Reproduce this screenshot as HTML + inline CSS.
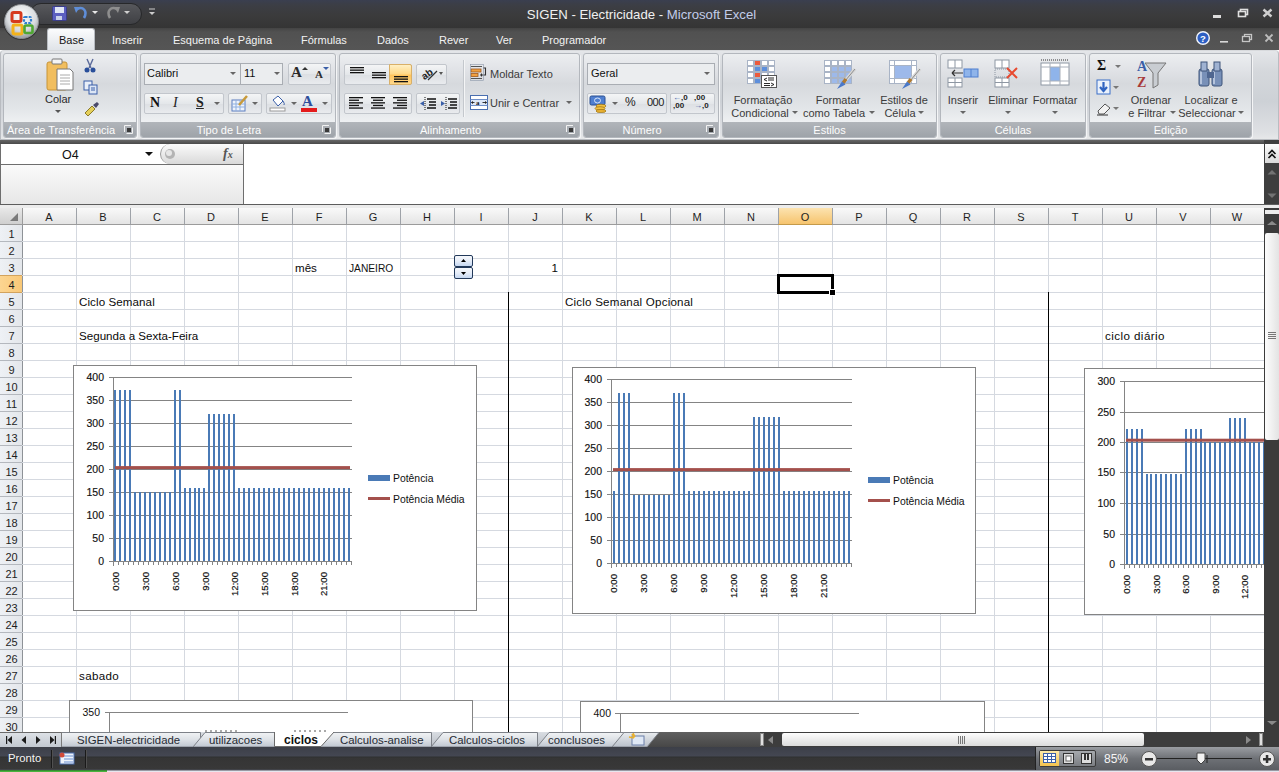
<!DOCTYPE html>
<html><head><meta charset="utf-8"><style>
html,body{margin:0;padding:0;width:1279px;height:772px;overflow:hidden;background:#fff;font-family:"Liberation Sans", sans-serif;}
</style></head><body>
<div style="position:absolute;left:0px;top:0px;width:1279px;height:28px;background:linear-gradient(#3a3f50 0px,#3c3e45 5px,#3b3b3c 15px,#353535 28px);"></div><div style="position:absolute;left:30px;top:3px;width:112px;height:22px;background:linear-gradient(#57585c,#3f4044);border-radius:11px;border:1px solid #27282a;box-sizing:border-box;"></div><svg style="position:absolute;left:52px;top:6px" width="15" height="15" viewBox="0 0 15 15"><rect x="0.5" y="0.5" width="14" height="14" rx="1" fill="#5b5fc0" stroke="#3a3d8a"/><rect x="3" y="1" width="9" height="6" fill="#dfe6f5"/><rect x="4" y="10" width="6" height="4" fill="#c8d0ea"/></svg><svg style="position:absolute;left:73px;top:5px" width="16" height="16" viewBox="0 0 16 16"><path d="M4 4 C10 1 15 6 11 13" stroke="#5f8ed8" stroke-width="2.6" fill="none"/><path d="M1 2 L7 2 L3 8 Z" fill="#5f8ed8"/></svg><svg style="position:absolute;left:92px;top:11px" width="6" height="4"><path d="M0 0 H6 L3 3 Z" fill="#e8e8e8"/></svg><svg style="position:absolute;left:105px;top:5px" width="16" height="16" viewBox="0 0 16 16"><path d="M12 4 C6 1 1 6 5 13" stroke="#8e8e8e" stroke-width="2.6" fill="none"/><path d="M15 2 L9 2 L13 8 Z" fill="#8e8e8e"/></svg><svg style="position:absolute;left:124px;top:11px" width="6" height="4"><path d="M0 0 H6 L3 3 Z" fill="#d0d0d0"/></svg><svg style="position:absolute;left:148px;top:8px" width="8" height="10"><path d="M1 1 H7" stroke="#ccc"/><path d="M1 4 H7 L4 7 Z" fill="#ccc"/></svg><div style="position:absolute;left:0;width:1279px;top:7px;text-align:center;font-size:13.2px;line-height:16px;color:#f0f0f0;white-space:nowrap;padding-left:2px">SIGEN - Electricidade - <span style="color:#c2cdea">Microsoft Excel</span></div><svg style="position:absolute;left:1200px;top:0px" width="79" height="28" viewBox="0 0 79 28"><rect x="13" y="15" width="8" height="3" fill="#dcdcdc"/><rect x="40.5" y="9.5" width="7" height="5" fill="none" stroke="#e0e0e0" stroke-width="1.6"/><rect x="38.5" y="11.5" width="7" height="5" fill="#3a3a3a" stroke="#e0e0e0" stroke-width="1.6"/><path d="M63.5 9.5 L71.5 16.5 M71.5 9.5 L63.5 16.5" stroke="#cfcfcf" stroke-width="2.4"/></svg><div style="position:absolute;left:0px;top:28px;width:1279px;height:22px;background:linear-gradient(#444,#515151 4px,#555 22px);"></div><div style="position:absolute;left:47px;top:28px;width:48px;height:24px;background:linear-gradient(#fbfcfd,#dde1e6);border:1px solid #b8bcc2;border-bottom:none;border-radius:3px 3px 0 0;box-sizing:border-box;"></div><div style="position:absolute;left:59px;top:34px;font-size:11px;line-height:13px;color:#151515;white-space:nowrap;">Base</div><div style="position:absolute;left:112px;top:34px;font-size:11px;line-height:13px;color:#f2f2f2;white-space:nowrap;">Inserir</div><div style="position:absolute;left:173px;top:34px;font-size:11px;line-height:13px;color:#f2f2f2;white-space:nowrap;">Esquema de Página</div><div style="position:absolute;left:301px;top:34px;font-size:11px;line-height:13px;color:#f2f2f2;white-space:nowrap;">Fórmulas</div><div style="position:absolute;left:377px;top:34px;font-size:11px;line-height:13px;color:#f2f2f2;white-space:nowrap;">Dados</div><div style="position:absolute;left:439px;top:34px;font-size:11px;line-height:13px;color:#f2f2f2;white-space:nowrap;">Rever</div><div style="position:absolute;left:496px;top:34px;font-size:11px;line-height:13px;color:#f2f2f2;white-space:nowrap;">Ver</div><div style="position:absolute;left:542px;top:34px;font-size:11px;line-height:13px;color:#f2f2f2;white-space:nowrap;">Programador</div><svg style="position:absolute;left:1194px;top:29px" width="85" height="20" viewBox="0 0 85 20"><circle cx="9" cy="9" r="6.3" fill="#2d5fc4" stroke="#f2f5fb" stroke-width="1.4"/><text x="9" y="12.5" font-size="9.5" font-weight="bold" text-anchor="middle" fill="#fff" font-family="Liberation Sans">?</text><rect x="26" y="12" width="8" height="1.6" fill="#d8d8d8"/><rect x="50.5" y="5.5" width="7" height="5" fill="none" stroke="#c6c6c6" stroke-width="1.3"/><rect x="48.5" y="7.5" width="7" height="5" fill="#4f4f4f" stroke="#c6c6c6" stroke-width="1.3"/><path d="M71.5 5.5 L78.5 12.5 M78.5 5.5 L71.5 12.5" stroke="#bdbdbd" stroke-width="1.8"/></svg><svg style="position:absolute;left:2px;top:2px" width="40" height="40" viewBox="0 0 40 40"><defs><radialGradient id="ob" cx="50%" cy="35%" r="60%"><stop offset="0" stop-color="#ffffff"/><stop offset="0.7" stop-color="#d9dcdf"/><stop offset="1" stop-color="#a2a6ab"/></radialGradient></defs><circle cx="19.5" cy="20" r="18" fill="#222" opacity="0.6"/><circle cx="19.5" cy="19.5" r="17" fill="url(#ob)" stroke="#8a8d91" stroke-width="1"/><rect x="10" y="10.5" width="9" height="9" rx="1.5" fill="none" stroke="#d63a1e" stroke-width="3"/><rect x="22" y="15" width="7" height="6" rx="1" fill="none" stroke="#2f7fd0" stroke-width="2.2" stroke-dasharray="2.5 1.2"/><rect x="11" y="23" width="9" height="9" rx="1.5" fill="none" stroke="#f3b21a" stroke-width="3"/><rect x="22.5" y="23.5" width="8" height="7.5" rx="1.5" fill="none" stroke="#4fa832" stroke-width="2.6"/></svg><div style="position:absolute;left:0px;top:50px;width:1279px;height:90px;background:linear-gradient(#e4e6e9 0px,#d5d8dc 20px,#cdd1d6 50px,#dfe1e4 82px,#e9eaeb 90px);border:1px solid #b9bcc1;border-top-color:#d8dadd;border-radius:4px 4px 0 0;box-sizing:border-box;"></div><div style="position:absolute;left:3px;top:53px;width:134px;height:85px;border:1px solid #b3b7bd;border-radius:3px;box-sizing:border-box;box-shadow:1px 1px 0 #f4f5f6;background:linear-gradient(#eceef0 0px,#e2e4e8 14px,#d6d9dd 30px,#e3e6e9 55px,#eef0f2 68px);"></div><div style="position:absolute;left:4px;top:122px;width:132px;height:15px;background:linear-gradient(#b1b5ba,#9ea3a9);border-radius:0 0 2px 2px;"></div><div style="position:absolute;left:-139.0px;width:400px;top:124.0px;text-align:center;font-size:11px;line-height:13px;color:#fdfdfd;white-space:nowrap;">Área de Transferência</div><svg style="position:absolute;left:124px;top:125px" width="9" height="9"><path d="M0.5 7 V0.5 H7" fill="none" stroke="#f2f2f2"/><path d="M2.5 8.5 H8.5 V2.5" fill="none" stroke="#f2f2f2"/><rect x="3" y="3" width="4" height="4" fill="#3a3a3a"/></svg><div style="position:absolute;left:140px;top:53px;width:196px;height:85px;border:1px solid #b3b7bd;border-radius:3px;box-sizing:border-box;box-shadow:1px 1px 0 #f4f5f6;background:linear-gradient(#eceef0 0px,#e2e4e8 14px,#d6d9dd 30px,#e3e6e9 55px,#eef0f2 68px);"></div><div style="position:absolute;left:141px;top:122px;width:194px;height:15px;background:linear-gradient(#b1b5ba,#9ea3a9);border-radius:0 0 2px 2px;"></div><div style="position:absolute;left:29.0px;width:400px;top:124.0px;text-align:center;font-size:11px;line-height:13px;color:#fdfdfd;white-space:nowrap;">Tipo de Letra</div><svg style="position:absolute;left:322px;top:125px" width="9" height="9"><path d="M0.5 7 V0.5 H7" fill="none" stroke="#f2f2f2"/><path d="M2.5 8.5 H8.5 V2.5" fill="none" stroke="#f2f2f2"/><rect x="3" y="3" width="4" height="4" fill="#3a3a3a"/></svg><div style="position:absolute;left:339px;top:53px;width:241px;height:85px;border:1px solid #b3b7bd;border-radius:3px;box-sizing:border-box;box-shadow:1px 1px 0 #f4f5f6;background:linear-gradient(#eceef0 0px,#e2e4e8 14px,#d6d9dd 30px,#e3e6e9 55px,#eef0f2 68px);"></div><div style="position:absolute;left:340px;top:122px;width:239px;height:15px;background:linear-gradient(#b1b5ba,#9ea3a9);border-radius:0 0 2px 2px;"></div><div style="position:absolute;left:250.5px;width:400px;top:124.0px;text-align:center;font-size:11px;line-height:13px;color:#fdfdfd;white-space:nowrap;">Alinhamento</div><svg style="position:absolute;left:566px;top:125px" width="9" height="9"><path d="M0.5 7 V0.5 H7" fill="none" stroke="#f2f2f2"/><path d="M2.5 8.5 H8.5 V2.5" fill="none" stroke="#f2f2f2"/><rect x="3" y="3" width="4" height="4" fill="#3a3a3a"/></svg><div style="position:absolute;left:583px;top:53px;width:136px;height:85px;border:1px solid #b3b7bd;border-radius:3px;box-sizing:border-box;box-shadow:1px 1px 0 #f4f5f6;background:linear-gradient(#eceef0 0px,#e2e4e8 14px,#d6d9dd 30px,#e3e6e9 55px,#eef0f2 68px);"></div><div style="position:absolute;left:584px;top:122px;width:134px;height:15px;background:linear-gradient(#b1b5ba,#9ea3a9);border-radius:0 0 2px 2px;"></div><div style="position:absolute;left:442.0px;width:400px;top:124.0px;text-align:center;font-size:11px;line-height:13px;color:#fdfdfd;white-space:nowrap;">Número</div><svg style="position:absolute;left:706px;top:125px" width="9" height="9"><path d="M0.5 7 V0.5 H7" fill="none" stroke="#f2f2f2"/><path d="M2.5 8.5 H8.5 V2.5" fill="none" stroke="#f2f2f2"/><rect x="3" y="3" width="4" height="4" fill="#3a3a3a"/></svg><div style="position:absolute;left:722px;top:53px;width:215px;height:85px;border:1px solid #b3b7bd;border-radius:3px;box-sizing:border-box;box-shadow:1px 1px 0 #f4f5f6;background:linear-gradient(#eceef0 0px,#e2e4e8 14px,#d6d9dd 30px,#e3e6e9 55px,#eef0f2 68px);"></div><div style="position:absolute;left:723px;top:122px;width:213px;height:15px;background:linear-gradient(#b1b5ba,#9ea3a9);border-radius:0 0 2px 2px;"></div><div style="position:absolute;left:629.5px;width:400px;top:124.0px;text-align:center;font-size:11px;line-height:13px;color:#fdfdfd;white-space:nowrap;">Estilos</div><div style="position:absolute;left:940px;top:53px;width:146px;height:85px;border:1px solid #b3b7bd;border-radius:3px;box-sizing:border-box;box-shadow:1px 1px 0 #f4f5f6;background:linear-gradient(#eceef0 0px,#e2e4e8 14px,#d6d9dd 30px,#e3e6e9 55px,#eef0f2 68px);"></div><div style="position:absolute;left:941px;top:122px;width:144px;height:15px;background:linear-gradient(#b1b5ba,#9ea3a9);border-radius:0 0 2px 2px;"></div><div style="position:absolute;left:813.0px;width:400px;top:124.0px;text-align:center;font-size:11px;line-height:13px;color:#fdfdfd;white-space:nowrap;">Células</div><div style="position:absolute;left:1089px;top:53px;width:163px;height:85px;border:1px solid #b3b7bd;border-radius:3px;box-sizing:border-box;box-shadow:1px 1px 0 #f4f5f6;background:linear-gradient(#eceef0 0px,#e2e4e8 14px,#d6d9dd 30px,#e3e6e9 55px,#eef0f2 68px);"></div><div style="position:absolute;left:1090px;top:122px;width:161px;height:15px;background:linear-gradient(#b1b5ba,#9ea3a9);border-radius:0 0 2px 2px;"></div><div style="position:absolute;left:970.5px;width:400px;top:124.0px;text-align:center;font-size:11px;line-height:13px;color:#fdfdfd;white-space:nowrap;">Edição</div><svg style="position:absolute;left:44px;top:57px" width="32" height="36" viewBox="0 0 32 36"><rect x="3" y="5" width="20" height="28" rx="2" fill="#f1be5f" stroke="#c89437"/><rect x="8" y="2" width="10" height="5" rx="1" fill="#f4f4f4" stroke="#777"/><path d="M13 12 H26 L29 15 V33 H13 Z" fill="#fff" stroke="#777"/><path d="M16 18 H26 M16 21 H26 M16 24 H26 M16 27 H26" stroke="#aaa"/></svg><div style="position:absolute;left:45px;top:93px;font-size:11px;line-height:13px;color:#2b2b2b;white-space:nowrap;">Colar</div><svg style="position:absolute;left:55px;top:110px" width="6" height="4"><path d="M0 0 H6 L3 3 Z" fill="#555"/></svg><svg style="position:absolute;left:83px;top:58px" width="14" height="16" viewBox="0 0 14 16"><path d="M4 1 L8 10 M10 1 L6 10" stroke="#5a6a9a" stroke-width="1.4"/><circle cx="4" cy="12" r="2.5" fill="#2a4f9a"/><circle cx="10" cy="12" r="2.5" fill="#2a4f9a"/></svg><svg style="position:absolute;left:83px;top:80px" width="16" height="15" viewBox="0 0 16 15"><rect x="1" y="1" width="8" height="9" fill="#e8eef8" stroke="#3a5fa8"/><rect x="6" y="5" width="8" height="9" fill="#dce6f5" stroke="#3a5fa8"/><path d="M8 8 H12 M8 10 H12" stroke="#3a5fa8"/></svg><svg style="position:absolute;left:83px;top:101px" width="17" height="17" viewBox="0 0 17 17"><path d="M2 12 L9 5 L12 8 L5 15 Z" fill="#e5cf5a" stroke="#8a7a2a"/><path d="M10 4 L14 1 L16 3 L13 7 Z" fill="#4a4a6a"/></svg><div style="position:absolute;left:144px;top:63px;width:97px;height:22px;border:1px solid #a9adb3;box-sizing:border-box;background:#ebedef;"></div><div style="position:absolute;left:240px;top:63px;width:43px;height:22px;border:1px solid #a9adb3;box-sizing:border-box;background:#ebedef;"></div><div style="position:absolute;left:147px;top:67px;font-size:11px;line-height:13px;color:#111;white-space:nowrap;">Calibri</div><div style="position:absolute;left:244px;top:67px;font-size:11px;line-height:13px;color:#111;white-space:nowrap;">11</div><svg style="position:absolute;left:230px;top:72px" width="6" height="4"><path d="M0 0 H6 L3 3 Z" fill="#666"/></svg><svg style="position:absolute;left:274px;top:72px" width="6" height="4"><path d="M0 0 H6 L3 3 Z" fill="#666"/></svg><div style="position:absolute;left:288px;top:63px;width:43px;height:22px;border:1px solid #c2c6cc;border-radius:2px;box-sizing:border-box;background:linear-gradient(#f4f5f6,#e4e7ea 50%,#dcdfe3 51%,#e9ebee);"></div><div style="position:absolute;left:291px;top:64px;font-size:15px;line-height:17px;color:#2a2a2a;white-space:nowrap;font-family:Liberation Serif;font-weight:bold;">A</div><div style="position:absolute;left:315px;top:68px;font-size:11px;line-height:13px;color:#2a2a2a;white-space:nowrap;font-family:Liberation Serif;font-weight:bold;">A</div><svg style="position:absolute;left:302px;top:67px" width="6" height="4"><path d="M0 3 H6 L3 0 Z" fill="#333"/></svg><svg style="position:absolute;left:323px;top:67px" width="6" height="4"><path d="M0 0 H6 L3 3 Z" fill="#3a5fa8"/></svg><div style="position:absolute;left:144px;top:93px;width:80px;height:21px;border:1px solid #c2c6cc;border-radius:2px;box-sizing:border-box;background:linear-gradient(#f4f5f6,#e4e7ea 50%,#dcdfe3 51%,#e9ebee);"></div><div style="position:absolute;left:150px;top:95px;font-size:14px;line-height:16px;color:#111;white-space:nowrap;font-family:Liberation Serif;font-weight:bold;">N</div><div style="position:absolute;left:173px;top:95px;font-size:14px;line-height:16px;color:#222;white-space:nowrap;font-family:Liberation Serif;font-style:italic;">I</div><div style="position:absolute;left:196px;top:95px;font-size:14px;line-height:16px;color:#222;white-space:nowrap;font-family:Liberation Serif;font-weight:bold;"><u>S</u></div><svg style="position:absolute;left:214px;top:102px" width="6" height="4"><path d="M0 0 H6 L3 3 Z" fill="#666"/></svg><div style="position:absolute;left:228px;top:93px;width:34px;height:21px;border:1px solid #c2c6cc;border-radius:2px;box-sizing:border-box;background:linear-gradient(#f4f5f6,#e4e7ea 50%,#dcdfe3 51%,#e9ebee);"></div><svg style="position:absolute;left:231px;top:95px" width="18" height="17" viewBox="0 0 18 17"><rect x="1" y="5" width="13" height="11" fill="#eef3fb" stroke="#5d7fc0"/><path d="M1 9 H14 M1 12 H14 M5 5 V16 M9 5 V16" stroke="#8fb0e0"/><path d="M8 10 L16 1" stroke="#c89a3a" stroke-width="2.5"/></svg><svg style="position:absolute;left:252px;top:102px" width="6" height="4"><path d="M0 0 H6 L3 3 Z" fill="#666"/></svg><div style="position:absolute;left:266px;top:93px;width:66px;height:21px;border:1px solid #c2c6cc;border-radius:2px;box-sizing:border-box;background:linear-gradient(#f4f5f6,#e4e7ea 50%,#dcdfe3 51%,#e9ebee);"></div><svg style="position:absolute;left:269px;top:95px" width="18" height="17" viewBox="0 0 18 17"><path d="M4 5 L9 1 L14 6 L9 11 Z" fill="#fff" stroke="#3a5fa8"/><path d="M14 6 Q16 9 15 10" stroke="#3a5fa8" fill="none"/><rect x="1" y="13" width="15" height="3" fill="#fff" stroke="#999"/></svg><svg style="position:absolute;left:291px;top:102px" width="6" height="4"><path d="M0 0 H6 L3 3 Z" fill="#666"/></svg><div style="position:absolute;left:302px;top:93px;font-size:15px;line-height:17px;color:#2d4f9c;white-space:nowrap;font-family:Liberation Serif;font-weight:bold;">A</div><div style="position:absolute;left:301px;top:108px;width:16px;height:4px;background:#e41b1b;"></div><svg style="position:absolute;left:322px;top:102px" width="6" height="4"><path d="M0 0 H6 L3 3 Z" fill="#666"/></svg><div style="position:absolute;left:344px;top:64px;width:68px;height:21px;border:1px solid #c2c6cc;border-radius:2px;box-sizing:border-box;background:linear-gradient(#f4f5f6,#e4e7ea 50%,#dcdfe3 51%,#e9ebee);"></div><div style="position:absolute;left:389px;top:64px;width:23px;height:21px;background:linear-gradient(#fff0c4,#ffd98a 45%,#ffc45e 55%,#ffd88a);border:1px solid #d9b068;box-sizing:border-box;border-radius:0 2px 2px 0;"></div><svg style="position:absolute;left:350px;top:67px" width="20" height="14"><rect x="0" y="0.0" width="14" height="1.3" fill="#111"/><rect x="0" y="2.5" width="14" height="1.3" fill="#111"/><rect x="0" y="5.0" width="14" height="1.3" fill="#111"/></svg><svg style="position:absolute;left:372px;top:72px" width="20" height="14"><rect x="0" y="0.0" width="14" height="1.3" fill="#111"/><rect x="0" y="2.5" width="14" height="1.3" fill="#111"/><rect x="0" y="5.0" width="14" height="1.3" fill="#111"/></svg><svg style="position:absolute;left:394px;top:76px" width="20" height="14"><rect x="0" y="0.0" width="14" height="1.3" fill="#111"/><rect x="0" y="2.5" width="14" height="1.3" fill="#111"/><rect x="0" y="5.0" width="14" height="1.3" fill="#111"/></svg><div style="position:absolute;left:416px;top:64px;width:31px;height:21px;border:1px solid #c2c6cc;border-radius:2px;box-sizing:border-box;background:linear-gradient(#f4f5f6,#e4e7ea 50%,#dcdfe3 51%,#e9ebee);"></div><svg style="position:absolute;left:420px;top:66px" width="24" height="16" viewBox="0 0 24 16"><text x="1" y="12" font-size="10" font-family="Liberation Sans" font-weight="bold" fill="#222" transform="rotate(-35 6 8)">ab</text><path d="M8 14 L17 5" stroke="#333" stroke-width="1.2"/><path d="M19 6 H23 L21 9 Z" fill="#555"/></svg><div style="position:absolute;left:344px;top:93px;width:68px;height:21px;border:1px solid #c2c6cc;border-radius:2px;box-sizing:border-box;background:linear-gradient(#f4f5f6,#e4e7ea 50%,#dcdfe3 51%,#e9ebee);"></div><svg style="position:absolute;left:349px;top:97px" width="20" height="14"><rect x="0" y="0.0" width="14" height="1.3" fill="#111"/><rect x="0" y="2.6" width="10" height="1.3" fill="#111"/><rect x="0" y="5.2" width="14" height="1.3" fill="#111"/><rect x="0" y="7.8" width="10" height="1.3" fill="#111"/><rect x="0" y="10.4" width="14" height="1.3" fill="#111"/></svg><svg style="position:absolute;left:371px;top:97px" width="20" height="14"><rect x="0" y="0.0" width="14" height="1.3" fill="#111"/><rect x="2" y="2.6" width="10" height="1.3" fill="#111"/><rect x="0" y="5.2" width="14" height="1.3" fill="#111"/><rect x="2" y="7.8" width="10" height="1.3" fill="#111"/><rect x="0" y="10.4" width="14" height="1.3" fill="#111"/></svg><svg style="position:absolute;left:393px;top:97px" width="20" height="14"><rect x="0" y="0.0" width="14" height="1.3" fill="#111"/><rect x="4" y="2.6" width="10" height="1.3" fill="#111"/><rect x="0" y="5.2" width="14" height="1.3" fill="#111"/><rect x="4" y="7.8" width="10" height="1.3" fill="#111"/><rect x="0" y="10.4" width="14" height="1.3" fill="#111"/></svg><div style="position:absolute;left:416px;top:93px;width:44px;height:21px;border:1px solid #c2c6cc;border-radius:2px;box-sizing:border-box;background:linear-gradient(#f4f5f6,#e4e7ea 50%,#dcdfe3 51%,#e9ebee);"></div><svg style="position:absolute;left:419px;top:96px" width="40" height="16" viewBox="0 0 40 16"><path d="M6 1 V15 M27 1 V15" stroke="#111" stroke-dasharray="1 1"/><path d="M8 3 H17 M10 6 H17 M10 9 H17 M8 12 H17 M29 3 H38 M31 6 H38 M31 9 H38 M29 12 H38" stroke="#111" stroke-width="1.6"/><path d="M1 7.5 L5 5 V10 Z" fill="#3a5fa8"/><path d="M26 7.5 L22 5 V10 Z" fill="#3a5fa8"/></svg><div style="position:absolute;left:463px;top:60px;width:1px;height:57px;background:#c4c8cd;border-right:1px solid #f4f5f6;"></div><svg style="position:absolute;left:470px;top:64px" width="18" height="18" viewBox="0 0 18 18"><path d="M1 2.5 H12 M1 14.5 H12" stroke="#555" stroke-width="1.2"/><rect x="1" y="5" width="10" height="3" fill="#f0a040" stroke="#a05a20" stroke-width="0.8"/><rect x="1" y="9.5" width="7" height="3" fill="#f0a040" stroke="#a05a20" stroke-width="0.8"/><path d="M13 4 H15.5 V11 H11" stroke="#333" stroke-width="1.1" fill="none"/><path d="M12 9 L10 11 L12 13 Z" fill="#333"/><rect x="0.5" y="0.5" width="13" height="16" fill="none" stroke="#8a96a8" stroke-width="0.6"/></svg><div style="position:absolute;left:490px;top:68px;font-size:11px;line-height:13px;color:#3b3b3b;white-space:nowrap;">Moldar Texto</div><svg style="position:absolute;left:470px;top:95px" width="18" height="16" viewBox="0 0 18 16"><rect x="0.5" y="0.5" width="17" height="14" fill="#fff" stroke="#4a6fb0"/><path d="M0.5 4.5 H17.5 M0.5 10.5 H17.5" stroke="#6f8fc8"/><rect x="1" y="5" width="16" height="5" fill="#dde7f6"/><text x="6" y="10" font-size="7" font-weight="bold" font-family="Liberation Serif" fill="#111">a</text><path d="M1.5 7.5 H4.5 M16.5 7.5 H12.5" stroke="#222" stroke-width="0.9"/><path d="M1 7.5 L3 6 V9 Z M17 7.5 L15 6 V9 Z" fill="#222"/></svg><div style="position:absolute;left:490px;top:97px;font-size:11px;line-height:13px;color:#3b3b3b;white-space:nowrap;">Unir e Centrar</div><svg style="position:absolute;left:566px;top:101px" width="6" height="4"><path d="M0 0 H6 L3 3 Z" fill="#666"/></svg><div style="position:absolute;left:587px;top:63px;width:128px;height:22px;border:1px solid #a9adb3;box-sizing:border-box;background:#ebedef;"></div><div style="position:absolute;left:591px;top:67px;font-size:11px;line-height:13px;color:#111;white-space:nowrap;">Geral</div><svg style="position:absolute;left:704px;top:72px" width="6" height="4"><path d="M0 0 H6 L3 3 Z" fill="#666"/></svg><div style="position:absolute;left:587px;top:93px;width:80px;height:21px;border:1px solid #c2c6cc;border-radius:2px;box-sizing:border-box;background:linear-gradient(#f4f5f6,#e4e7ea 50%,#dcdfe3 51%,#e9ebee);"></div><svg style="position:absolute;left:589px;top:95px" width="20" height="18" viewBox="0 0 20 18"><rect x="1" y="1" width="15" height="9" rx="1.5" fill="#4f7fd0" stroke="#2a4f90"/><ellipse cx="8.5" cy="5.5" rx="3" ry="2.5" fill="none" stroke="#d8e6fa" stroke-width="1"/><ellipse cx="12" cy="11" rx="5" ry="1.8" fill="#f2c040" stroke="#9a7010" stroke-width="0.7"/><ellipse cx="11" cy="13.5" rx="5" ry="1.8" fill="#f2c040" stroke="#9a7010" stroke-width="0.7"/><ellipse cx="12" cy="16" rx="5" ry="1.6" fill="#e8b030" stroke="#9a7010" stroke-width="0.7"/></svg><svg style="position:absolute;left:612px;top:102px" width="6" height="4"><path d="M0 0 H6 L3 3 Z" fill="#666"/></svg><div style="position:absolute;left:625px;top:95px;font-size:12px;line-height:14px;color:#222;white-space:nowrap;">%</div><div style="position:absolute;left:647px;top:96px;font-size:11px;line-height:13px;color:#222;white-space:nowrap;letter-spacing:-0.5px">000</div><div style="position:absolute;left:670px;top:93px;width:45px;height:21px;border:1px solid #c2c6cc;border-radius:2px;box-sizing:border-box;background:linear-gradient(#f4f5f6,#e4e7ea 50%,#dcdfe3 51%,#e9ebee);"></div><div style="position:absolute;left:673px;top:94px;font-size:8px;line-height:10px;color:#222;white-space:nowrap;line-height:8px;font-weight:bold"><span style="font-size:8px;color:#3a5fa8">&#8592;</span>,0<br>,00</div><div style="position:absolute;left:694px;top:94px;font-size:8px;line-height:10px;color:#222;white-space:nowrap;line-height:8px;font-weight:bold">,00<br><span style="font-size:8px;color:#3a5fa8">&#8594;</span>,0</div><svg style="position:absolute;left:747px;top:60px" width="32" height="30" viewBox="0 0 32 30"><rect x="0.5" y="0.5" width="6" height="5" fill="#fff" stroke="#a9b4c6" stroke-width="1"/><rect x="7.5" y="0.5" width="6" height="5" fill="#ec5a3c" stroke="#a9b4c6" stroke-width="1"/><rect x="14.5" y="0.5" width="6" height="5" fill="#fff" stroke="#a9b4c6" stroke-width="1"/><rect x="21.5" y="0.5" width="6" height="5" fill="#fff" stroke="#a9b4c6" stroke-width="1"/><rect x="0.5" y="6.5" width="6" height="5" fill="#fff" stroke="#a9b4c6" stroke-width="1"/><rect x="7.5" y="6.5" width="6" height="5" fill="#5d8fdc" stroke="#a9b4c6" stroke-width="1"/><rect x="14.5" y="6.5" width="6" height="5" fill="#5d8fdc" stroke="#a9b4c6" stroke-width="1"/><rect x="21.5" y="6.5" width="6" height="5" fill="#fff" stroke="#a9b4c6" stroke-width="1"/><rect x="0.5" y="12.5" width="6" height="5" fill="#fff" stroke="#a9b4c6" stroke-width="1"/><rect x="7.5" y="12.5" width="6" height="5" fill="#ec5a3c" stroke="#a9b4c6" stroke-width="1"/><rect x="14.5" y="12.5" width="6" height="5" fill="#fff" stroke="#a9b4c6" stroke-width="1"/><rect x="21.5" y="12.5" width="6" height="5" fill="#fff" stroke="#a9b4c6" stroke-width="1"/><rect x="0.5" y="18.5" width="6" height="5" fill="#fff" stroke="#a9b4c6" stroke-width="1"/><rect x="7.5" y="18.5" width="6" height="5" fill="#5d8fdc" stroke="#a9b4c6" stroke-width="1"/><rect x="14.5" y="18.5" width="6" height="5" fill="#fff" stroke="#a9b4c6" stroke-width="1"/><rect x="21.5" y="18.5" width="6" height="5" fill="#fff" stroke="#a9b4c6" stroke-width="1"/><rect x="14.5" y="15.5" width="15" height="12" fill="#fff" stroke="#555"/><path d="M20 18 L17 19.5 L20 21 M21 18 H27 M21 20 H27 M17 23.5 H23 M17 25.5 H23 M24 23 L27 24.5 L24 26" stroke="#111" stroke-width="0.9" fill="none"/></svg><div style="position:absolute;left:563px;width:400px;top:93.5px;text-align:center;font-size:11px;line-height:13px;color:#3b3b3b;white-space:nowrap;">Formatação</div><div style="position:absolute;left:560px;width:400px;top:106.5px;text-align:center;font-size:11px;line-height:13px;color:#3b3b3b;white-space:nowrap;">Condicional</div><svg style="position:absolute;left:792px;top:111px" width="6" height="4"><path d="M0 0 H6 L3 3 Z" fill="#666"/></svg><svg style="position:absolute;left:824px;top:60px" width="34" height="30" viewBox="0 0 34 30"><rect x="0.5" y="0.5" width="6" height="5" fill="#fff" stroke="#a9b4c6" stroke-width="1"/><rect x="7.5" y="0.5" width="6" height="5" fill="#fff" stroke="#a9b4c6" stroke-width="1"/><rect x="14.5" y="0.5" width="6" height="5" fill="#fff" stroke="#a9b4c6" stroke-width="1"/><rect x="21.5" y="0.5" width="6" height="5" fill="#fff" stroke="#a9b4c6" stroke-width="1"/><rect x="0.5" y="6.5" width="6" height="5" fill="#fff" stroke="#a9b4c6" stroke-width="1"/><rect x="7.5" y="6.5" width="6" height="5" fill="#9db9ea" stroke="#a9b4c6" stroke-width="1"/><rect x="14.5" y="6.5" width="6" height="5" fill="#9db9ea" stroke="#a9b4c6" stroke-width="1"/><rect x="21.5" y="6.5" width="6" height="5" fill="#9db9ea" stroke="#a9b4c6" stroke-width="1"/><rect x="0.5" y="12.5" width="6" height="5" fill="#fff" stroke="#a9b4c6" stroke-width="1"/><rect x="7.5" y="12.5" width="6" height="5" fill="#9db9ea" stroke="#a9b4c6" stroke-width="1"/><rect x="14.5" y="12.5" width="6" height="5" fill="#9db9ea" stroke="#a9b4c6" stroke-width="1"/><rect x="21.5" y="12.5" width="6" height="5" fill="#9db9ea" stroke="#a9b4c6" stroke-width="1"/><rect x="0.5" y="18.5" width="6" height="5" fill="#fff" stroke="#a9b4c6" stroke-width="1"/><rect x="7.5" y="18.5" width="6" height="5" fill="#9db9ea" stroke="#a9b4c6" stroke-width="1"/><rect x="14.5" y="18.5" width="6" height="5" fill="#9db9ea" stroke="#a9b4c6" stroke-width="1"/><rect x="21.5" y="18.5" width="6" height="5" fill="#9db9ea" stroke="#a9b4c6" stroke-width="1"/><path d="M31 9 L21 21" stroke="#d8d8d8" stroke-width="3.5"/><path d="M31 9 L21 21" stroke="#8c8c8c" stroke-width="1"/><path d="M22 19 L19 23" stroke="#b07a30" stroke-width="3.5"/><path d="M13 29 L18 21.5 L21.5 24.5 Z" fill="#4a78c8"/></svg><div style="position:absolute;left:638px;width:400px;top:93.5px;text-align:center;font-size:11px;line-height:13px;color:#3b3b3b;white-space:nowrap;">Formatar</div><div style="position:absolute;left:634px;width:400px;top:106.5px;text-align:center;font-size:11px;line-height:13px;color:#3b3b3b;white-space:nowrap;">como Tabela</div><svg style="position:absolute;left:869px;top:111px" width="6" height="4"><path d="M0 0 H6 L3 3 Z" fill="#666"/></svg><svg style="position:absolute;left:889px;top:60px" width="34" height="30" viewBox="0 0 34 30"><rect x="0.5" y="0.5" width="27" height="23" fill="#fff" stroke="#a9b4c6"/><path d="M0.5 5.5 H27.5 M0.5 18.5 H27.5 M5.5 0.5 V23.5 M22.5 0.5 V23.5" stroke="#a9b4c6"/><rect x="6" y="6" width="16" height="12" fill="#9db9ea"/><path d="M31 9 L21 21" stroke="#d8d8d8" stroke-width="3.5"/><path d="M31 9 L21 21" stroke="#8c8c8c" stroke-width="1"/><path d="M22 19 L19 23" stroke="#b07a30" stroke-width="3.5"/><path d="M13 29 L18 21.5 L21.5 24.5 Z" fill="#4a78c8"/></svg><div style="position:absolute;left:704px;width:400px;top:93.5px;text-align:center;font-size:11px;line-height:13px;color:#3b3b3b;white-space:nowrap;">Estilos de</div><div style="position:absolute;left:700px;width:400px;top:106.5px;text-align:center;font-size:11px;line-height:13px;color:#3b3b3b;white-space:nowrap;">Célula</div><svg style="position:absolute;left:918px;top:111px" width="6" height="4"><path d="M0 0 H6 L3 3 Z" fill="#666"/></svg><svg style="position:absolute;left:947px;top:59px" width="32" height="30" viewBox="0 0 32 30"><rect x="1" y="1" width="14" height="8" fill="#fff" stroke="#8e97a3"/><path d="M8 1 V9" stroke="#8e97a3"/><rect x="1" y="19" width="14" height="9" fill="#fff" stroke="#8e97a3"/><path d="M8 19 V28 M1 23.5 H15" stroke="#8e97a3"/><rect x="17" y="10" width="14" height="8" fill="#8fb4ea" stroke="#4f7fcf"/><path d="M24 10 V18" stroke="#4f7fcf"/><path d="M5 14 H16 M5 14 L8 11 M5 14 L8 17" stroke="#333" stroke-width="1.2"/></svg><div style="position:absolute;left:763px;width:400px;top:93.5px;text-align:center;font-size:11px;line-height:13px;color:#3b3b3b;white-space:nowrap;">Inserir</div><svg style="position:absolute;left:960px;top:111px" width="6" height="4"><path d="M0 0 H6 L3 3 Z" fill="#666"/></svg><svg style="position:absolute;left:994px;top:59px" width="32" height="30" viewBox="0 0 32 30"><rect x="1" y="1" width="14" height="8" fill="#fff" stroke="#8e97a3"/><path d="M8 1 V9" stroke="#8e97a3"/><rect x="1" y="19" width="14" height="9" fill="#fff" stroke="#8e97a3"/><path d="M8 19 V28 M1 23.5 H15" stroke="#8e97a3"/><rect x="1" y="10" width="14" height="8" fill="none" stroke="#8e97a3" stroke-dasharray="1 1"/><path d="M13 9 L23 19 M23 9 L13 19" stroke="#e84a30" stroke-width="2"/></svg><div style="position:absolute;left:808px;width:400px;top:93.5px;text-align:center;font-size:11px;line-height:13px;color:#3b3b3b;white-space:nowrap;">Eliminar</div><svg style="position:absolute;left:1005px;top:111px" width="6" height="4"><path d="M0 0 H6 L3 3 Z" fill="#666"/></svg><svg style="position:absolute;left:1039px;top:58px" width="32" height="32" viewBox="0 0 32 32"><path d="M2 2 H30" stroke="#333" stroke-dasharray="1 1"/><rect x="2" y="5" width="28" height="22" fill="#fff" stroke="#8e97a3"/><rect x="11" y="9" width="10" height="14" fill="#8fb4ea"/><path d="M2 9 H30 M2 23 H30 M11 5 V27 M21 5 V27" stroke="#a9b0ba"/></svg><div style="position:absolute;left:855px;width:400px;top:93.5px;text-align:center;font-size:11px;line-height:13px;color:#3b3b3b;white-space:nowrap;">Formatar</div><svg style="position:absolute;left:1052px;top:111px" width="6" height="4"><path d="M0 0 H6 L3 3 Z" fill="#666"/></svg><div style="position:absolute;left:1097px;top:58px;font-size:14px;line-height:16px;color:#111;white-space:nowrap;font-weight:bold;font-family:Liberation Serif">&#931;</div><svg style="position:absolute;left:1115px;top:65px" width="6" height="4"><path d="M0 0 H6 L3 3 Z" fill="#777"/></svg><svg style="position:absolute;left:1096px;top:79px" width="16" height="16" viewBox="0 0 16 16"><rect x="1" y="1" width="13" height="14" fill="#eaf1fb" stroke="#3a6fc8"/><path d="M7.5 3 V10 M4 8 L7.5 12 L11 8" stroke="#2f63c0" stroke-width="2.2" fill="none"/></svg><svg style="position:absolute;left:1113px;top:86px" width="6" height="4"><path d="M0 0 H6 L3 3 Z" fill="#777"/></svg><svg style="position:absolute;left:1096px;top:101px" width="17" height="15" viewBox="0 0 17 15"><path d="M2 10 L9 3 L14 7 L8 13 H3 Z" fill="#f2f2f2" stroke="#555"/><path d="M1 14 H12" stroke="#333"/></svg><svg style="position:absolute;left:1113px;top:107px" width="6" height="4"><path d="M0 0 H6 L3 3 Z" fill="#777"/></svg><svg style="position:absolute;left:1135px;top:57px" width="32" height="34" viewBox="0 0 32 34"><text x="2" y="14" font-size="14" font-weight="bold" font-family="Liberation Serif" fill="#3a5fa8">A</text><text x="2" y="30" font-size="14" font-weight="bold" font-family="Liberation Serif" fill="#a83a3a">Z</text><path d="M10 6 H31 L23 16 V28 L18 31 V16 Z" fill="#c9cdd2" stroke="#777"/></svg><div style="position:absolute;left:951px;width:400px;top:93.5px;text-align:center;font-size:11px;line-height:13px;color:#3b3b3b;white-space:nowrap;">Ordenar</div><div style="position:absolute;left:947px;width:400px;top:106.5px;text-align:center;font-size:11px;line-height:13px;color:#3b3b3b;white-space:nowrap;">e Filtrar</div><svg style="position:absolute;left:1170px;top:111px" width="6" height="4"><path d="M0 0 H6 L3 3 Z" fill="#666"/></svg><svg style="position:absolute;left:1196px;top:59px" width="30" height="30" viewBox="0 0 30 30"><rect x="3" y="10" width="10" height="17" rx="2" fill="#7890b8" stroke="#3f557a"/><rect x="16" y="10" width="10" height="17" rx="2" fill="#7890b8" stroke="#3f557a"/><path d="M5 12 V25 M18 12 V25" stroke="#c8d4e8" stroke-width="1.5"/><rect x="5" y="3" width="6" height="9" fill="#9fb2d2" stroke="#3f557a"/><rect x="18" y="3" width="6" height="9" fill="#9fb2d2" stroke="#3f557a"/><rect x="11" y="13" width="7" height="6" fill="#4f6690"/></svg><div style="position:absolute;left:1011px;width:400px;top:93.5px;text-align:center;font-size:11px;line-height:13px;color:#3b3b3b;white-space:nowrap;">Localizar e</div><div style="position:absolute;left:1007px;width:400px;top:106.5px;text-align:center;font-size:11px;line-height:13px;color:#3b3b3b;white-space:nowrap;">Seleccionar</div><svg style="position:absolute;left:1238px;top:111px" width="6" height="4"><path d="M0 0 H6 L3 3 Z" fill="#666"/></svg><div style="position:absolute;left:0px;top:140px;width:1279px;height:4px;background:linear-gradient(#666,#4a4a4a);"></div><div style="position:absolute;left:0px;top:144px;width:1264px;height:61px;background:#fff;"></div><div style="position:absolute;left:0px;top:144px;width:244px;height:61px;border:1px solid #6e6e6e;border-top:none;box-sizing:border-box;background:#fff;"></div><div style="position:absolute;left:1px;top:164px;width:242px;height:40px;background:linear-gradient(#fafafa,#e6e6e6);border-top:1px solid #6e6e6e;"></div><div style="position:absolute;left:62px;top:148px;font-size:12.5px;line-height:14.5px;color:#111;white-space:nowrap;">O4</div><svg style="position:absolute;left:145px;top:152px" width="8" height="5"><path d="M0 0 H8 L4 4 Z" fill="#111"/></svg><div style="position:absolute;left:160px;top:144px;width:83px;height:20px;background:linear-gradient(#fbfbfb,#d9d9d9);border-left:1px solid #9a9a9a;border-radius:10px 0 0 10px;box-sizing:border-box;"></div><svg style="position:absolute;left:163px;top:147px" width="14" height="14"><circle cx="7" cy="7" r="5" fill="#b4b4b4"/><circle cx="6" cy="6" r="3" fill="#e6e6e6"/></svg><div style="position:absolute;left:223px;top:146px;font-size:14px;line-height:16px;color:#555;white-space:nowrap;font-family:Liberation Serif;font-weight:bold"><i>f</i><span style="font-size:10px"><i>x</i></span></div><div style="position:absolute;left:0px;top:204px;width:1279px;height:1px;background:#5d5d5d;"></div><div style="position:absolute;left:0px;top:205px;width:1279px;height:4px;background:#ececec;border-bottom:1px solid #9a9a9a;box-sizing:border-box;"></div><div style="position:absolute;left:1264px;top:140px;width:15px;height:64px;background:#3e3e3e;"></div><div style="position:absolute;left:1265px;top:144px;width:14px;height:19px;background:linear-gradient(#fdfdfd,#d9d9d9);"></div><svg style="position:absolute;left:1266px;top:148px" width="12" height="12"><path d="M2.5 6 L6 2.5 L9.5 6 M2.5 10 L6 6.5 L9.5 10" stroke="#111" stroke-width="1.7" fill="none"/></svg><svg style="position:absolute;left:1266px;top:169px" width="12" height="6"><path d="M1.5 5.5 L6 1 L10.5 5.5 Z" fill="#737373"/></svg><svg style="position:absolute;left:1266px;top:193px" width="12" height="6"><path d="M1.5 0.5 L6 5 L10.5 0.5 Z" fill="#737373"/></svg><div style="position:absolute;left:0px;top:208px;width:1264px;height:524px;background:#fff;"></div><div style="position:absolute;left:0px;top:208px;width:1264px;height:17px;background:linear-gradient(#f9f9f9,#e4e4e4);border-bottom:1px solid #9b9b9b;box-sizing:border-box;"></div><div style="position:absolute;left:778px;top:208px;width:54px;height:17px;background:linear-gradient(#fce3b0,#f6c46e);border-bottom:1px solid #c49a4a;box-sizing:border-box;"></div><div style="position:absolute;left:76px;top:208px;width:1px;height:16px;background:#9ea2a8;"></div><div style="position:absolute;left:-151.0px;width:400px;top:210.5px;text-align:center;font-size:11px;line-height:13px;color:#1e1e1e;white-space:nowrap;">A</div><div style="position:absolute;left:130px;top:208px;width:1px;height:16px;background:#9ea2a8;"></div><div style="position:absolute;left:-97.0px;width:400px;top:210.5px;text-align:center;font-size:11px;line-height:13px;color:#1e1e1e;white-space:nowrap;">B</div><div style="position:absolute;left:184px;top:208px;width:1px;height:16px;background:#9ea2a8;"></div><div style="position:absolute;left:-43.0px;width:400px;top:210.5px;text-align:center;font-size:11px;line-height:13px;color:#1e1e1e;white-space:nowrap;">C</div><div style="position:absolute;left:238px;top:208px;width:1px;height:16px;background:#9ea2a8;"></div><div style="position:absolute;left:11.0px;width:400px;top:210.5px;text-align:center;font-size:11px;line-height:13px;color:#1e1e1e;white-space:nowrap;">D</div><div style="position:absolute;left:292px;top:208px;width:1px;height:16px;background:#9ea2a8;"></div><div style="position:absolute;left:65.0px;width:400px;top:210.5px;text-align:center;font-size:11px;line-height:13px;color:#1e1e1e;white-space:nowrap;">E</div><div style="position:absolute;left:346px;top:208px;width:1px;height:16px;background:#9ea2a8;"></div><div style="position:absolute;left:119.0px;width:400px;top:210.5px;text-align:center;font-size:11px;line-height:13px;color:#1e1e1e;white-space:nowrap;">F</div><div style="position:absolute;left:400px;top:208px;width:1px;height:16px;background:#9ea2a8;"></div><div style="position:absolute;left:173.0px;width:400px;top:210.5px;text-align:center;font-size:11px;line-height:13px;color:#1e1e1e;white-space:nowrap;">G</div><div style="position:absolute;left:454px;top:208px;width:1px;height:16px;background:#9ea2a8;"></div><div style="position:absolute;left:227.0px;width:400px;top:210.5px;text-align:center;font-size:11px;line-height:13px;color:#1e1e1e;white-space:nowrap;">H</div><div style="position:absolute;left:508px;top:208px;width:1px;height:16px;background:#9ea2a8;"></div><div style="position:absolute;left:281.0px;width:400px;top:210.5px;text-align:center;font-size:11px;line-height:13px;color:#1e1e1e;white-space:nowrap;">I</div><div style="position:absolute;left:562px;top:208px;width:1px;height:16px;background:#9ea2a8;"></div><div style="position:absolute;left:335.0px;width:400px;top:210.5px;text-align:center;font-size:11px;line-height:13px;color:#1e1e1e;white-space:nowrap;">J</div><div style="position:absolute;left:616px;top:208px;width:1px;height:16px;background:#9ea2a8;"></div><div style="position:absolute;left:389.0px;width:400px;top:210.5px;text-align:center;font-size:11px;line-height:13px;color:#1e1e1e;white-space:nowrap;">K</div><div style="position:absolute;left:670px;top:208px;width:1px;height:16px;background:#9ea2a8;"></div><div style="position:absolute;left:443.0px;width:400px;top:210.5px;text-align:center;font-size:11px;line-height:13px;color:#1e1e1e;white-space:nowrap;">L</div><div style="position:absolute;left:724px;top:208px;width:1px;height:16px;background:#9ea2a8;"></div><div style="position:absolute;left:497.0px;width:400px;top:210.5px;text-align:center;font-size:11px;line-height:13px;color:#1e1e1e;white-space:nowrap;">M</div><div style="position:absolute;left:778px;top:208px;width:1px;height:16px;background:#9ea2a8;"></div><div style="position:absolute;left:551.0px;width:400px;top:210.5px;text-align:center;font-size:11px;line-height:13px;color:#1e1e1e;white-space:nowrap;">N</div><div style="position:absolute;left:832px;top:208px;width:1px;height:16px;background:#9ea2a8;"></div><div style="position:absolute;left:605.0px;width:400px;top:210.5px;text-align:center;font-size:11px;line-height:13px;color:#1e1e1e;white-space:nowrap;">O</div><div style="position:absolute;left:886px;top:208px;width:1px;height:16px;background:#9ea2a8;"></div><div style="position:absolute;left:659.0px;width:400px;top:210.5px;text-align:center;font-size:11px;line-height:13px;color:#1e1e1e;white-space:nowrap;">P</div><div style="position:absolute;left:940px;top:208px;width:1px;height:16px;background:#9ea2a8;"></div><div style="position:absolute;left:713.0px;width:400px;top:210.5px;text-align:center;font-size:11px;line-height:13px;color:#1e1e1e;white-space:nowrap;">Q</div><div style="position:absolute;left:994px;top:208px;width:1px;height:16px;background:#9ea2a8;"></div><div style="position:absolute;left:767.0px;width:400px;top:210.5px;text-align:center;font-size:11px;line-height:13px;color:#1e1e1e;white-space:nowrap;">R</div><div style="position:absolute;left:1048px;top:208px;width:1px;height:16px;background:#9ea2a8;"></div><div style="position:absolute;left:821.0px;width:400px;top:210.5px;text-align:center;font-size:11px;line-height:13px;color:#1e1e1e;white-space:nowrap;">S</div><div style="position:absolute;left:1102px;top:208px;width:1px;height:16px;background:#9ea2a8;"></div><div style="position:absolute;left:875.0px;width:400px;top:210.5px;text-align:center;font-size:11px;line-height:13px;color:#1e1e1e;white-space:nowrap;">T</div><div style="position:absolute;left:1156px;top:208px;width:1px;height:16px;background:#9ea2a8;"></div><div style="position:absolute;left:929.0px;width:400px;top:210.5px;text-align:center;font-size:11px;line-height:13px;color:#1e1e1e;white-space:nowrap;">U</div><div style="position:absolute;left:1210px;top:208px;width:1px;height:16px;background:#9ea2a8;"></div><div style="position:absolute;left:983.0px;width:400px;top:210.5px;text-align:center;font-size:11px;line-height:13px;color:#1e1e1e;white-space:nowrap;">V</div><div style="position:absolute;left:1264px;top:208px;width:1px;height:16px;background:#9ea2a8;"></div><div style="position:absolute;left:1037.0px;width:400px;top:210.5px;text-align:center;font-size:11px;line-height:13px;color:#1e1e1e;white-space:nowrap;">W</div><div style="position:absolute;left:0px;top:208px;width:23px;height:17px;background:linear-gradient(#e8e8e8,#cfcfcf);border-right:1px solid #9b9b9b;border-bottom:1px solid #9b9b9b;box-sizing:border-box;"></div><svg style="position:absolute;left:10px;top:213px" width="9" height="9"><path d="M8 0 V8 H0 Z" fill="#7a7a7a"/></svg><div style="position:absolute;left:0px;top:225px;width:23px;height:507px;background:linear-gradient(90deg,#eef1f5,#e4e7eb);border-right:1px solid #8e9297;box-sizing:border-box;"></div><div style="position:absolute;left:0px;top:241px;width:22px;height:1px;background:#b4b8be;"></div><div style="position:absolute;left:-188.5px;width:400px;top:228.0px;text-align:center;font-size:11px;line-height:13px;color:#1e1e1e;white-space:nowrap;">1</div><div style="position:absolute;left:0px;top:258px;width:22px;height:1px;background:#b4b8be;"></div><div style="position:absolute;left:-188.5px;width:400px;top:245.0px;text-align:center;font-size:11px;line-height:13px;color:#1e1e1e;white-space:nowrap;">2</div><div style="position:absolute;left:-188.5px;width:400px;top:262.0px;text-align:center;font-size:11px;line-height:13px;color:#1e1e1e;white-space:nowrap;">3</div><div style="position:absolute;left:0px;top:275px;width:22px;height:18px;background:linear-gradient(90deg,#fcd591,#f9c877);border-top:1px solid #d2a35e;border-bottom:1px solid #d2a35e;box-sizing:border-box;"></div><div style="position:absolute;left:-188.5px;width:400px;top:279.0px;text-align:center;font-size:11px;line-height:13px;color:#1e1e1e;white-space:nowrap;">4</div><div style="position:absolute;left:0px;top:309px;width:22px;height:1px;background:#b4b8be;"></div><div style="position:absolute;left:-188.5px;width:400px;top:296.0px;text-align:center;font-size:11px;line-height:13px;color:#1e1e1e;white-space:nowrap;">5</div><div style="position:absolute;left:0px;top:326px;width:22px;height:1px;background:#b4b8be;"></div><div style="position:absolute;left:-188.5px;width:400px;top:313.0px;text-align:center;font-size:11px;line-height:13px;color:#1e1e1e;white-space:nowrap;">6</div><div style="position:absolute;left:0px;top:343px;width:22px;height:1px;background:#b4b8be;"></div><div style="position:absolute;left:-188.5px;width:400px;top:330.0px;text-align:center;font-size:11px;line-height:13px;color:#1e1e1e;white-space:nowrap;">7</div><div style="position:absolute;left:0px;top:360px;width:22px;height:1px;background:#b4b8be;"></div><div style="position:absolute;left:-188.5px;width:400px;top:347.0px;text-align:center;font-size:11px;line-height:13px;color:#1e1e1e;white-space:nowrap;">8</div><div style="position:absolute;left:0px;top:377px;width:22px;height:1px;background:#b4b8be;"></div><div style="position:absolute;left:-188.5px;width:400px;top:364.0px;text-align:center;font-size:11px;line-height:13px;color:#1e1e1e;white-space:nowrap;">9</div><div style="position:absolute;left:0px;top:394px;width:22px;height:1px;background:#b4b8be;"></div><div style="position:absolute;left:-188.5px;width:400px;top:381.0px;text-align:center;font-size:11px;line-height:13px;color:#1e1e1e;white-space:nowrap;">10</div><div style="position:absolute;left:0px;top:411px;width:22px;height:1px;background:#b4b8be;"></div><div style="position:absolute;left:-188.5px;width:400px;top:398.0px;text-align:center;font-size:11px;line-height:13px;color:#1e1e1e;white-space:nowrap;">11</div><div style="position:absolute;left:0px;top:428px;width:22px;height:1px;background:#b4b8be;"></div><div style="position:absolute;left:-188.5px;width:400px;top:415.0px;text-align:center;font-size:11px;line-height:13px;color:#1e1e1e;white-space:nowrap;">12</div><div style="position:absolute;left:0px;top:445px;width:22px;height:1px;background:#b4b8be;"></div><div style="position:absolute;left:-188.5px;width:400px;top:432.0px;text-align:center;font-size:11px;line-height:13px;color:#1e1e1e;white-space:nowrap;">13</div><div style="position:absolute;left:0px;top:462px;width:22px;height:1px;background:#b4b8be;"></div><div style="position:absolute;left:-188.5px;width:400px;top:449.0px;text-align:center;font-size:11px;line-height:13px;color:#1e1e1e;white-space:nowrap;">14</div><div style="position:absolute;left:0px;top:479px;width:22px;height:1px;background:#b4b8be;"></div><div style="position:absolute;left:-188.5px;width:400px;top:466.0px;text-align:center;font-size:11px;line-height:13px;color:#1e1e1e;white-space:nowrap;">15</div><div style="position:absolute;left:0px;top:496px;width:22px;height:1px;background:#b4b8be;"></div><div style="position:absolute;left:-188.5px;width:400px;top:483.0px;text-align:center;font-size:11px;line-height:13px;color:#1e1e1e;white-space:nowrap;">16</div><div style="position:absolute;left:0px;top:513px;width:22px;height:1px;background:#b4b8be;"></div><div style="position:absolute;left:-188.5px;width:400px;top:500.0px;text-align:center;font-size:11px;line-height:13px;color:#1e1e1e;white-space:nowrap;">17</div><div style="position:absolute;left:0px;top:530px;width:22px;height:1px;background:#b4b8be;"></div><div style="position:absolute;left:-188.5px;width:400px;top:517.0px;text-align:center;font-size:11px;line-height:13px;color:#1e1e1e;white-space:nowrap;">18</div><div style="position:absolute;left:0px;top:547px;width:22px;height:1px;background:#b4b8be;"></div><div style="position:absolute;left:-188.5px;width:400px;top:534.0px;text-align:center;font-size:11px;line-height:13px;color:#1e1e1e;white-space:nowrap;">19</div><div style="position:absolute;left:0px;top:564px;width:22px;height:1px;background:#b4b8be;"></div><div style="position:absolute;left:-188.5px;width:400px;top:551.0px;text-align:center;font-size:11px;line-height:13px;color:#1e1e1e;white-space:nowrap;">20</div><div style="position:absolute;left:0px;top:581px;width:22px;height:1px;background:#b4b8be;"></div><div style="position:absolute;left:-188.5px;width:400px;top:568.0px;text-align:center;font-size:11px;line-height:13px;color:#1e1e1e;white-space:nowrap;">21</div><div style="position:absolute;left:0px;top:598px;width:22px;height:1px;background:#b4b8be;"></div><div style="position:absolute;left:-188.5px;width:400px;top:585.0px;text-align:center;font-size:11px;line-height:13px;color:#1e1e1e;white-space:nowrap;">22</div><div style="position:absolute;left:0px;top:615px;width:22px;height:1px;background:#b4b8be;"></div><div style="position:absolute;left:-188.5px;width:400px;top:602.0px;text-align:center;font-size:11px;line-height:13px;color:#1e1e1e;white-space:nowrap;">23</div><div style="position:absolute;left:0px;top:632px;width:22px;height:1px;background:#b4b8be;"></div><div style="position:absolute;left:-188.5px;width:400px;top:619.0px;text-align:center;font-size:11px;line-height:13px;color:#1e1e1e;white-space:nowrap;">24</div><div style="position:absolute;left:0px;top:649px;width:22px;height:1px;background:#b4b8be;"></div><div style="position:absolute;left:-188.5px;width:400px;top:636.0px;text-align:center;font-size:11px;line-height:13px;color:#1e1e1e;white-space:nowrap;">25</div><div style="position:absolute;left:0px;top:666px;width:22px;height:1px;background:#b4b8be;"></div><div style="position:absolute;left:-188.5px;width:400px;top:653.0px;text-align:center;font-size:11px;line-height:13px;color:#1e1e1e;white-space:nowrap;">26</div><div style="position:absolute;left:0px;top:683px;width:22px;height:1px;background:#b4b8be;"></div><div style="position:absolute;left:-188.5px;width:400px;top:670.0px;text-align:center;font-size:11px;line-height:13px;color:#1e1e1e;white-space:nowrap;">27</div><div style="position:absolute;left:0px;top:700px;width:22px;height:1px;background:#b4b8be;"></div><div style="position:absolute;left:-188.5px;width:400px;top:687.0px;text-align:center;font-size:11px;line-height:13px;color:#1e1e1e;white-space:nowrap;">28</div><div style="position:absolute;left:0px;top:717px;width:22px;height:1px;background:#b4b8be;"></div><div style="position:absolute;left:-188.5px;width:400px;top:704.0px;text-align:center;font-size:11px;line-height:13px;color:#1e1e1e;white-space:nowrap;">29</div><div style="position:absolute;left:0px;top:734px;width:22px;height:1px;background:#b4b8be;"></div><div style="position:absolute;left:-188.5px;width:400px;top:721.0px;text-align:center;font-size:11px;line-height:13px;color:#1e1e1e;white-space:nowrap;">30</div><div style="position:absolute;left:22px;top:241px;width:1242px;height:1px;background:#d5d9e0"></div><div style="position:absolute;left:22px;top:258px;width:1242px;height:1px;background:#d5d9e0"></div><div style="position:absolute;left:22px;top:275px;width:1242px;height:1px;background:#d5d9e0"></div><div style="position:absolute;left:22px;top:292px;width:1242px;height:1px;background:#d5d9e0"></div><div style="position:absolute;left:22px;top:309px;width:1242px;height:1px;background:#d5d9e0"></div><div style="position:absolute;left:22px;top:326px;width:1242px;height:1px;background:#d5d9e0"></div><div style="position:absolute;left:22px;top:343px;width:1242px;height:1px;background:#d5d9e0"></div><div style="position:absolute;left:22px;top:360px;width:1242px;height:1px;background:#d5d9e0"></div><div style="position:absolute;left:22px;top:377px;width:1242px;height:1px;background:#d5d9e0"></div><div style="position:absolute;left:22px;top:394px;width:1242px;height:1px;background:#d5d9e0"></div><div style="position:absolute;left:22px;top:411px;width:1242px;height:1px;background:#d5d9e0"></div><div style="position:absolute;left:22px;top:428px;width:1242px;height:1px;background:#d5d9e0"></div><div style="position:absolute;left:22px;top:445px;width:1242px;height:1px;background:#d5d9e0"></div><div style="position:absolute;left:22px;top:462px;width:1242px;height:1px;background:#d5d9e0"></div><div style="position:absolute;left:22px;top:479px;width:1242px;height:1px;background:#d5d9e0"></div><div style="position:absolute;left:22px;top:496px;width:1242px;height:1px;background:#d5d9e0"></div><div style="position:absolute;left:22px;top:513px;width:1242px;height:1px;background:#d5d9e0"></div><div style="position:absolute;left:22px;top:530px;width:1242px;height:1px;background:#d5d9e0"></div><div style="position:absolute;left:22px;top:547px;width:1242px;height:1px;background:#d5d9e0"></div><div style="position:absolute;left:22px;top:564px;width:1242px;height:1px;background:#d5d9e0"></div><div style="position:absolute;left:22px;top:581px;width:1242px;height:1px;background:#d5d9e0"></div><div style="position:absolute;left:22px;top:598px;width:1242px;height:1px;background:#d5d9e0"></div><div style="position:absolute;left:22px;top:615px;width:1242px;height:1px;background:#d5d9e0"></div><div style="position:absolute;left:22px;top:632px;width:1242px;height:1px;background:#d5d9e0"></div><div style="position:absolute;left:22px;top:649px;width:1242px;height:1px;background:#d5d9e0"></div><div style="position:absolute;left:22px;top:666px;width:1242px;height:1px;background:#d5d9e0"></div><div style="position:absolute;left:22px;top:683px;width:1242px;height:1px;background:#d5d9e0"></div><div style="position:absolute;left:22px;top:700px;width:1242px;height:1px;background:#d5d9e0"></div><div style="position:absolute;left:22px;top:717px;width:1242px;height:1px;background:#d5d9e0"></div><div style="position:absolute;left:22px;top:734px;width:1242px;height:1px;background:#d5d9e0"></div><div style="position:absolute;left:76px;top:225px;width:1px;height:507px;background:#d5d9e0"></div><div style="position:absolute;left:130px;top:225px;width:1px;height:507px;background:#d5d9e0"></div><div style="position:absolute;left:184px;top:225px;width:1px;height:507px;background:#d5d9e0"></div><div style="position:absolute;left:238px;top:225px;width:1px;height:507px;background:#d5d9e0"></div><div style="position:absolute;left:292px;top:225px;width:1px;height:507px;background:#d5d9e0"></div><div style="position:absolute;left:346px;top:225px;width:1px;height:507px;background:#d5d9e0"></div><div style="position:absolute;left:400px;top:225px;width:1px;height:507px;background:#d5d9e0"></div><div style="position:absolute;left:454px;top:225px;width:1px;height:507px;background:#d5d9e0"></div><div style="position:absolute;left:508px;top:225px;width:1px;height:507px;background:#d5d9e0"></div><div style="position:absolute;left:562px;top:225px;width:1px;height:507px;background:#d5d9e0"></div><div style="position:absolute;left:616px;top:225px;width:1px;height:507px;background:#d5d9e0"></div><div style="position:absolute;left:670px;top:225px;width:1px;height:507px;background:#d5d9e0"></div><div style="position:absolute;left:724px;top:225px;width:1px;height:507px;background:#d5d9e0"></div><div style="position:absolute;left:778px;top:225px;width:1px;height:507px;background:#d5d9e0"></div><div style="position:absolute;left:832px;top:225px;width:1px;height:507px;background:#d5d9e0"></div><div style="position:absolute;left:886px;top:225px;width:1px;height:507px;background:#d5d9e0"></div><div style="position:absolute;left:940px;top:225px;width:1px;height:507px;background:#d5d9e0"></div><div style="position:absolute;left:994px;top:225px;width:1px;height:507px;background:#d5d9e0"></div><div style="position:absolute;left:1048px;top:225px;width:1px;height:507px;background:#d5d9e0"></div><div style="position:absolute;left:1102px;top:225px;width:1px;height:507px;background:#d5d9e0"></div><div style="position:absolute;left:1156px;top:225px;width:1px;height:507px;background:#d5d9e0"></div><div style="position:absolute;left:1210px;top:225px;width:1px;height:507px;background:#d5d9e0"></div><div style="position:absolute;left:1264px;top:225px;width:1px;height:507px;background:#d5d9e0"></div><div style="position:absolute;left:295px;top:261px;font-size:11.6px;line-height:13.6px;color:#0a0a0a;white-space:nowrap;letter-spacing:0px">mês</div><div style="position:absolute;left:349px;top:261px;font-size:11.6px;line-height:13.6px;color:#111;white-space:nowrap;transform:scaleX(0.88);transform-origin:0 0">JANEIRO</div><div style="position:absolute;left:508px;width:50px;top:261px;text-align:right;font-size:11.6px;line-height:14px;color:#0a0a0a">1</div><div style="position:absolute;left:79px;top:295px;font-size:11.6px;line-height:13.6px;color:#0a0a0a;white-space:nowrap;letter-spacing:0.08px">Ciclo Semanal</div><div style="position:absolute;left:79px;top:329px;font-size:11.6px;line-height:13.6px;color:#0a0a0a;white-space:nowrap;letter-spacing:0px">Segunda a Sexta-Feira</div><div style="position:absolute;left:565px;top:295px;font-size:11.6px;line-height:13.6px;color:#0a0a0a;white-space:nowrap;letter-spacing:0.2px">Ciclo Semanal Opcional</div><div style="position:absolute;left:1105px;top:329px;font-size:11.6px;line-height:13.6px;color:#0a0a0a;white-space:nowrap;letter-spacing:0.43px">ciclo diário</div><div style="position:absolute;left:79px;top:669px;font-size:11.6px;line-height:13.6px;color:#0a0a0a;white-space:nowrap;letter-spacing:0.33px">sabado</div><div style="position:absolute;left:508px;top:292px;width:1px;height:440px;background:#000;"></div><div style="position:absolute;left:1048px;top:292px;width:1px;height:440px;background:#000;"></div><div style="position:absolute;left:777px;top:274px;width:57px;height:20px;border:3px solid #000;box-sizing:border-box;"></div><div style="position:absolute;left:829px;top:289px;width:7px;height:7px;background:#fff;"></div><div style="position:absolute;left:830px;top:290px;width:5px;height:5px;background:#000;"></div><div style="position:absolute;left:454px;top:255px;width:19px;height:12px;border:1px solid #22395a;border-radius:2px;box-sizing:border-box;background:linear-gradient(#f6f8fc,#e6edf8 50%,#c6d8f2);"></div><div style="position:absolute;left:454px;top:267px;width:19px;height:12px;border:1px solid #22395a;border-radius:2px;box-sizing:border-box;background:linear-gradient(#f6f8fc,#e6edf8 50%,#c6d8f2);"></div><svg style="position:absolute;left:461px;top:259px" width="5" height="3"><path d="M0 3 H5 L2.5 0 Z" fill="#000"/></svg><svg style="position:absolute;left:461px;top:272px" width="5" height="3"><path d="M0 0 H5 L2.5 3 Z" fill="#000"/></svg><svg style="position:absolute;left:73px;top:365px" width="404" height="246" viewBox="73 365 404 246" shape-rendering="crispEdges"><rect x="73.5" y="365.5" width="403" height="245" fill="#fff" stroke="#848484"/><rect x="109" y="561" width="243" height="1" fill="#848484"/><text x="104" y="565" font-size="10.5" text-anchor="end" font-family="Liberation Sans" fill="#111" stroke="#111" stroke-width="0.15" shape-rendering="auto">0</text><rect x="109" y="538" width="243" height="1" fill="#848484"/><text x="104" y="542" font-size="10.5" text-anchor="end" font-family="Liberation Sans" fill="#111" stroke="#111" stroke-width="0.15" shape-rendering="auto">50</text><rect x="109" y="515" width="243" height="1" fill="#848484"/><text x="104" y="519" font-size="10.5" text-anchor="end" font-family="Liberation Sans" fill="#111" stroke="#111" stroke-width="0.15" shape-rendering="auto">100</text><rect x="109" y="492" width="243" height="1" fill="#848484"/><text x="104" y="496" font-size="10.5" text-anchor="end" font-family="Liberation Sans" fill="#111" stroke="#111" stroke-width="0.15" shape-rendering="auto">150</text><rect x="109" y="469" width="243" height="1" fill="#848484"/><text x="104" y="473" font-size="10.5" text-anchor="end" font-family="Liberation Sans" fill="#111" stroke="#111" stroke-width="0.15" shape-rendering="auto">200</text><rect x="109" y="446" width="243" height="1" fill="#848484"/><text x="104" y="450" font-size="10.5" text-anchor="end" font-family="Liberation Sans" fill="#111" stroke="#111" stroke-width="0.15" shape-rendering="auto">250</text><rect x="109" y="423" width="243" height="1" fill="#848484"/><text x="104" y="427" font-size="10.5" text-anchor="end" font-family="Liberation Sans" fill="#111" stroke="#111" stroke-width="0.15" shape-rendering="auto">300</text><rect x="109" y="400" width="243" height="1" fill="#848484"/><text x="104" y="404" font-size="10.5" text-anchor="end" font-family="Liberation Sans" fill="#111" stroke="#111" stroke-width="0.15" shape-rendering="auto">350</text><rect x="109" y="377" width="243" height="1" fill="#848484"/><text x="104" y="381" font-size="10.5" text-anchor="end" font-family="Liberation Sans" fill="#111" stroke="#111" stroke-width="0.15" shape-rendering="auto">400</text><rect x="113" y="377" width="1" height="189" fill="#848484"/><rect x="114" y="390" width="2" height="171" fill="#4a7ab6"/><rect x="119" y="390" width="2" height="171" fill="#4a7ab6"/><rect x="124" y="390" width="2" height="171" fill="#4a7ab6"/><rect x="129" y="390" width="2" height="171" fill="#4a7ab6"/><rect x="134" y="492" width="2" height="69" fill="#4a7ab6"/><rect x="139" y="492" width="2" height="69" fill="#4a7ab6"/><rect x="144" y="492" width="2" height="69" fill="#4a7ab6"/><rect x="149" y="492" width="2" height="69" fill="#4a7ab6"/><rect x="154" y="492" width="2" height="69" fill="#4a7ab6"/><rect x="159" y="492" width="2" height="69" fill="#4a7ab6"/><rect x="164" y="492" width="2" height="69" fill="#4a7ab6"/><rect x="169" y="492" width="2" height="69" fill="#4a7ab6"/><rect x="174" y="390" width="2" height="171" fill="#4a7ab6"/><rect x="179" y="390" width="2" height="171" fill="#4a7ab6"/><rect x="184" y="488" width="2" height="73" fill="#4a7ab6"/><rect x="189" y="488" width="2" height="73" fill="#4a7ab6"/><rect x="194" y="488" width="2" height="73" fill="#4a7ab6"/><rect x="198" y="488" width="2" height="73" fill="#4a7ab6"/><rect x="203" y="488" width="2" height="73" fill="#4a7ab6"/><rect x="208" y="414" width="2" height="147" fill="#4a7ab6"/><rect x="213" y="414" width="2" height="147" fill="#4a7ab6"/><rect x="218" y="414" width="2" height="147" fill="#4a7ab6"/><rect x="223" y="414" width="2" height="147" fill="#4a7ab6"/><rect x="228" y="414" width="2" height="147" fill="#4a7ab6"/><rect x="233" y="414" width="2" height="147" fill="#4a7ab6"/><rect x="238" y="488" width="2" height="73" fill="#4a7ab6"/><rect x="243" y="488" width="2" height="73" fill="#4a7ab6"/><rect x="248" y="488" width="2" height="73" fill="#4a7ab6"/><rect x="253" y="488" width="2" height="73" fill="#4a7ab6"/><rect x="258" y="488" width="2" height="73" fill="#4a7ab6"/><rect x="263" y="488" width="2" height="73" fill="#4a7ab6"/><rect x="268" y="488" width="2" height="73" fill="#4a7ab6"/><rect x="273" y="488" width="2" height="73" fill="#4a7ab6"/><rect x="278" y="488" width="2" height="73" fill="#4a7ab6"/><rect x="283" y="488" width="2" height="73" fill="#4a7ab6"/><rect x="288" y="488" width="2" height="73" fill="#4a7ab6"/><rect x="293" y="488" width="2" height="73" fill="#4a7ab6"/><rect x="298" y="488" width="2" height="73" fill="#4a7ab6"/><rect x="303" y="488" width="2" height="73" fill="#4a7ab6"/><rect x="308" y="488" width="2" height="73" fill="#4a7ab6"/><rect x="313" y="488" width="2" height="73" fill="#4a7ab6"/><rect x="318" y="488" width="2" height="73" fill="#4a7ab6"/><rect x="323" y="488" width="2" height="73" fill="#4a7ab6"/><rect x="328" y="488" width="2" height="73" fill="#4a7ab6"/><rect x="333" y="488" width="2" height="73" fill="#4a7ab6"/><rect x="338" y="488" width="2" height="73" fill="#4a7ab6"/><rect x="343" y="488" width="2" height="73" fill="#4a7ab6"/><rect x="348" y="488" width="2" height="73" fill="#4a7ab6"/><rect x="113" y="561" width="1" height="4" fill="#848484"/><rect x="118" y="561" width="1" height="4" fill="#848484"/><rect x="123" y="561" width="1" height="4" fill="#848484"/><rect x="128" y="561" width="1" height="4" fill="#848484"/><rect x="133" y="561" width="1" height="4" fill="#848484"/><rect x="138" y="561" width="1" height="4" fill="#848484"/><rect x="143" y="561" width="1" height="4" fill="#848484"/><rect x="148" y="561" width="1" height="4" fill="#848484"/><rect x="153" y="561" width="1" height="4" fill="#848484"/><rect x="158" y="561" width="1" height="4" fill="#848484"/><rect x="163" y="561" width="1" height="4" fill="#848484"/><rect x="167" y="561" width="1" height="4" fill="#848484"/><rect x="172" y="561" width="1" height="4" fill="#848484"/><rect x="177" y="561" width="1" height="4" fill="#848484"/><rect x="182" y="561" width="1" height="4" fill="#848484"/><rect x="187" y="561" width="1" height="4" fill="#848484"/><rect x="192" y="561" width="1" height="4" fill="#848484"/><rect x="197" y="561" width="1" height="4" fill="#848484"/><rect x="202" y="561" width="1" height="4" fill="#848484"/><rect x="207" y="561" width="1" height="4" fill="#848484"/><rect x="212" y="561" width="1" height="4" fill="#848484"/><rect x="217" y="561" width="1" height="4" fill="#848484"/><rect x="222" y="561" width="1" height="4" fill="#848484"/><rect x="227" y="561" width="1" height="4" fill="#848484"/><rect x="232" y="561" width="1" height="4" fill="#848484"/><rect x="237" y="561" width="1" height="4" fill="#848484"/><rect x="242" y="561" width="1" height="4" fill="#848484"/><rect x="247" y="561" width="1" height="4" fill="#848484"/><rect x="252" y="561" width="1" height="4" fill="#848484"/><rect x="257" y="561" width="1" height="4" fill="#848484"/><rect x="261" y="561" width="1" height="4" fill="#848484"/><rect x="266" y="561" width="1" height="4" fill="#848484"/><rect x="271" y="561" width="1" height="4" fill="#848484"/><rect x="276" y="561" width="1" height="4" fill="#848484"/><rect x="281" y="561" width="1" height="4" fill="#848484"/><rect x="286" y="561" width="1" height="4" fill="#848484"/><rect x="291" y="561" width="1" height="4" fill="#848484"/><rect x="296" y="561" width="1" height="4" fill="#848484"/><rect x="301" y="561" width="1" height="4" fill="#848484"/><rect x="306" y="561" width="1" height="4" fill="#848484"/><rect x="311" y="561" width="1" height="4" fill="#848484"/><rect x="316" y="561" width="1" height="4" fill="#848484"/><rect x="321" y="561" width="1" height="4" fill="#848484"/><rect x="326" y="561" width="1" height="4" fill="#848484"/><rect x="331" y="561" width="1" height="4" fill="#848484"/><rect x="336" y="561" width="1" height="4" fill="#848484"/><rect x="341" y="561" width="1" height="4" fill="#848484"/><rect x="346" y="561" width="1" height="4" fill="#848484"/><rect x="351" y="561" width="1" height="4" fill="#848484"/><rect x="115" y="466.1" width="235" height="3" fill="#a4504c" shape-rendering="auto"/><text transform="translate(119.4,572) rotate(-90)" font-size="9.6" text-anchor="end" font-family="Liberation Sans" fill="#111" stroke="#111" stroke-width="0.2" shape-rendering="auto">0:00</text><text transform="translate(149.1,572) rotate(-90)" font-size="9.6" text-anchor="end" font-family="Liberation Sans" fill="#111" stroke="#111" stroke-width="0.2" shape-rendering="auto">3:00</text><text transform="translate(178.8,572) rotate(-90)" font-size="9.6" text-anchor="end" font-family="Liberation Sans" fill="#111" stroke="#111" stroke-width="0.2" shape-rendering="auto">6:00</text><text transform="translate(208.5,572) rotate(-90)" font-size="9.6" text-anchor="end" font-family="Liberation Sans" fill="#111" stroke="#111" stroke-width="0.2" shape-rendering="auto">9:00</text><text transform="translate(238.2,572) rotate(-90)" font-size="9.6" text-anchor="end" font-family="Liberation Sans" fill="#111" stroke="#111" stroke-width="0.2" shape-rendering="auto">12:00</text><text transform="translate(267.9,572) rotate(-90)" font-size="9.6" text-anchor="end" font-family="Liberation Sans" fill="#111" stroke="#111" stroke-width="0.2" shape-rendering="auto">15:00</text><text transform="translate(297.6,572) rotate(-90)" font-size="9.6" text-anchor="end" font-family="Liberation Sans" fill="#111" stroke="#111" stroke-width="0.2" shape-rendering="auto">18:00</text><text transform="translate(327.3,572) rotate(-90)" font-size="9.6" text-anchor="end" font-family="Liberation Sans" fill="#111" stroke="#111" stroke-width="0.2" shape-rendering="auto">21:00</text><rect x="368" y="475" width="22" height="6" fill="#4a7ab6"/><text x="393" y="482" font-size="10.4" font-family="Liberation Sans" fill="#111" shape-rendering="auto">Potência</text><rect x="368" y="497" width="22" height="3" fill="#a4504c"/><text x="393" y="502.5" font-size="10.4" font-family="Liberation Sans" fill="#111" shape-rendering="auto">Potência Média</text></svg><svg style="position:absolute;left:572px;top:367px" width="404" height="247" viewBox="572 367 404 247" shape-rendering="crispEdges"><rect x="572.5" y="367.5" width="403" height="246" fill="#fff" stroke="#848484"/><rect x="607" y="563" width="245" height="1" fill="#848484"/><text x="602" y="567" font-size="10.5" text-anchor="end" font-family="Liberation Sans" fill="#111" stroke="#111" stroke-width="0.15" shape-rendering="auto">0</text><rect x="607" y="540" width="245" height="1" fill="#848484"/><text x="602" y="544" font-size="10.5" text-anchor="end" font-family="Liberation Sans" fill="#111" stroke="#111" stroke-width="0.15" shape-rendering="auto">50</text><rect x="607" y="517" width="245" height="1" fill="#848484"/><text x="602" y="521" font-size="10.5" text-anchor="end" font-family="Liberation Sans" fill="#111" stroke="#111" stroke-width="0.15" shape-rendering="auto">100</text><rect x="607" y="494" width="245" height="1" fill="#848484"/><text x="602" y="498" font-size="10.5" text-anchor="end" font-family="Liberation Sans" fill="#111" stroke="#111" stroke-width="0.15" shape-rendering="auto">150</text><rect x="607" y="471" width="245" height="1" fill="#848484"/><text x="602" y="475" font-size="10.5" text-anchor="end" font-family="Liberation Sans" fill="#111" stroke="#111" stroke-width="0.15" shape-rendering="auto">200</text><rect x="607" y="448" width="245" height="1" fill="#848484"/><text x="602" y="452" font-size="10.5" text-anchor="end" font-family="Liberation Sans" fill="#111" stroke="#111" stroke-width="0.15" shape-rendering="auto">250</text><rect x="607" y="425" width="245" height="1" fill="#848484"/><text x="602" y="429" font-size="10.5" text-anchor="end" font-family="Liberation Sans" fill="#111" stroke="#111" stroke-width="0.15" shape-rendering="auto">300</text><rect x="607" y="402" width="245" height="1" fill="#848484"/><text x="602" y="406" font-size="10.5" text-anchor="end" font-family="Liberation Sans" fill="#111" stroke="#111" stroke-width="0.15" shape-rendering="auto">350</text><rect x="607" y="379" width="245" height="1" fill="#848484"/><text x="602" y="383" font-size="10.5" text-anchor="end" font-family="Liberation Sans" fill="#111" stroke="#111" stroke-width="0.15" shape-rendering="auto">400</text><rect x="611" y="379" width="1" height="189" fill="#848484"/><rect x="613" y="491" width="2" height="72" fill="#4a7ab6"/><rect x="618" y="393" width="2" height="170" fill="#4a7ab6"/><rect x="623" y="393" width="2" height="170" fill="#4a7ab6"/><rect x="628" y="393" width="2" height="170" fill="#4a7ab6"/><rect x="633" y="495" width="2" height="68" fill="#4a7ab6"/><rect x="638" y="495" width="2" height="68" fill="#4a7ab6"/><rect x="643" y="495" width="2" height="68" fill="#4a7ab6"/><rect x="648" y="495" width="2" height="68" fill="#4a7ab6"/><rect x="653" y="495" width="2" height="68" fill="#4a7ab6"/><rect x="658" y="495" width="2" height="68" fill="#4a7ab6"/><rect x="663" y="495" width="2" height="68" fill="#4a7ab6"/><rect x="668" y="495" width="2" height="68" fill="#4a7ab6"/><rect x="673" y="393" width="2" height="170" fill="#4a7ab6"/><rect x="678" y="393" width="2" height="170" fill="#4a7ab6"/><rect x="683" y="393" width="2" height="170" fill="#4a7ab6"/><rect x="688" y="491" width="2" height="72" fill="#4a7ab6"/><rect x="693" y="491" width="2" height="72" fill="#4a7ab6"/><rect x="698" y="491" width="2" height="72" fill="#4a7ab6"/><rect x="703" y="491" width="2" height="72" fill="#4a7ab6"/><rect x="708" y="491" width="2" height="72" fill="#4a7ab6"/><rect x="713" y="491" width="2" height="72" fill="#4a7ab6"/><rect x="718" y="491" width="2" height="72" fill="#4a7ab6"/><rect x="723" y="491" width="2" height="72" fill="#4a7ab6"/><rect x="728" y="491" width="2" height="72" fill="#4a7ab6"/><rect x="733" y="491" width="2" height="72" fill="#4a7ab6"/><rect x="738" y="491" width="2" height="72" fill="#4a7ab6"/><rect x="743" y="491" width="2" height="72" fill="#4a7ab6"/><rect x="748" y="491" width="2" height="72" fill="#4a7ab6"/><rect x="753" y="417" width="2" height="146" fill="#4a7ab6"/><rect x="758" y="417" width="2" height="146" fill="#4a7ab6"/><rect x="763" y="417" width="2" height="146" fill="#4a7ab6"/><rect x="768" y="417" width="2" height="146" fill="#4a7ab6"/><rect x="773" y="417" width="2" height="146" fill="#4a7ab6"/><rect x="778" y="417" width="2" height="146" fill="#4a7ab6"/><rect x="783" y="491" width="2" height="72" fill="#4a7ab6"/><rect x="788" y="491" width="2" height="72" fill="#4a7ab6"/><rect x="793" y="491" width="2" height="72" fill="#4a7ab6"/><rect x="798" y="491" width="2" height="72" fill="#4a7ab6"/><rect x="803" y="491" width="2" height="72" fill="#4a7ab6"/><rect x="808" y="491" width="2" height="72" fill="#4a7ab6"/><rect x="813" y="491" width="2" height="72" fill="#4a7ab6"/><rect x="818" y="491" width="2" height="72" fill="#4a7ab6"/><rect x="823" y="491" width="2" height="72" fill="#4a7ab6"/><rect x="828" y="491" width="2" height="72" fill="#4a7ab6"/><rect x="833" y="491" width="2" height="72" fill="#4a7ab6"/><rect x="838" y="491" width="2" height="72" fill="#4a7ab6"/><rect x="843" y="491" width="2" height="72" fill="#4a7ab6"/><rect x="848" y="491" width="2" height="72" fill="#4a7ab6"/><rect x="611" y="563" width="1" height="4" fill="#848484"/><rect x="616" y="563" width="1" height="4" fill="#848484"/><rect x="621" y="563" width="1" height="4" fill="#848484"/><rect x="626" y="563" width="1" height="4" fill="#848484"/><rect x="631" y="563" width="1" height="4" fill="#848484"/><rect x="636" y="563" width="1" height="4" fill="#848484"/><rect x="641" y="563" width="1" height="4" fill="#848484"/><rect x="646" y="563" width="1" height="4" fill="#848484"/><rect x="651" y="563" width="1" height="4" fill="#848484"/><rect x="656" y="563" width="1" height="4" fill="#848484"/><rect x="661" y="563" width="1" height="4" fill="#848484"/><rect x="666" y="563" width="1" height="4" fill="#848484"/><rect x="671" y="563" width="1" height="4" fill="#848484"/><rect x="676" y="563" width="1" height="4" fill="#848484"/><rect x="681" y="563" width="1" height="4" fill="#848484"/><rect x="686" y="563" width="1" height="4" fill="#848484"/><rect x="691" y="563" width="1" height="4" fill="#848484"/><rect x="696" y="563" width="1" height="4" fill="#848484"/><rect x="701" y="563" width="1" height="4" fill="#848484"/><rect x="706" y="563" width="1" height="4" fill="#848484"/><rect x="711" y="563" width="1" height="4" fill="#848484"/><rect x="716" y="563" width="1" height="4" fill="#848484"/><rect x="721" y="563" width="1" height="4" fill="#848484"/><rect x="726" y="563" width="1" height="4" fill="#848484"/><rect x="731" y="563" width="1" height="4" fill="#848484"/><rect x="736" y="563" width="1" height="4" fill="#848484"/><rect x="741" y="563" width="1" height="4" fill="#848484"/><rect x="746" y="563" width="1" height="4" fill="#848484"/><rect x="751" y="563" width="1" height="4" fill="#848484"/><rect x="756" y="563" width="1" height="4" fill="#848484"/><rect x="761" y="563" width="1" height="4" fill="#848484"/><rect x="766" y="563" width="1" height="4" fill="#848484"/><rect x="771" y="563" width="1" height="4" fill="#848484"/><rect x="776" y="563" width="1" height="4" fill="#848484"/><rect x="781" y="563" width="1" height="4" fill="#848484"/><rect x="786" y="563" width="1" height="4" fill="#848484"/><rect x="791" y="563" width="1" height="4" fill="#848484"/><rect x="796" y="563" width="1" height="4" fill="#848484"/><rect x="801" y="563" width="1" height="4" fill="#848484"/><rect x="806" y="563" width="1" height="4" fill="#848484"/><rect x="811" y="563" width="1" height="4" fill="#848484"/><rect x="816" y="563" width="1" height="4" fill="#848484"/><rect x="821" y="563" width="1" height="4" fill="#848484"/><rect x="826" y="563" width="1" height="4" fill="#848484"/><rect x="831" y="563" width="1" height="4" fill="#848484"/><rect x="836" y="563" width="1" height="4" fill="#848484"/><rect x="841" y="563" width="1" height="4" fill="#848484"/><rect x="846" y="563" width="1" height="4" fill="#848484"/><rect x="851" y="563" width="1" height="4" fill="#848484"/><rect x="613" y="468.1" width="237" height="3" fill="#a4504c" shape-rendering="auto"/><text transform="translate(617.4,574) rotate(-90)" font-size="9.6" text-anchor="end" font-family="Liberation Sans" fill="#111" stroke="#111" stroke-width="0.2" shape-rendering="auto">0:00</text><text transform="translate(647.4,574) rotate(-90)" font-size="9.6" text-anchor="end" font-family="Liberation Sans" fill="#111" stroke="#111" stroke-width="0.2" shape-rendering="auto">3:00</text><text transform="translate(677.4,574) rotate(-90)" font-size="9.6" text-anchor="end" font-family="Liberation Sans" fill="#111" stroke="#111" stroke-width="0.2" shape-rendering="auto">6:00</text><text transform="translate(707.4,574) rotate(-90)" font-size="9.6" text-anchor="end" font-family="Liberation Sans" fill="#111" stroke="#111" stroke-width="0.2" shape-rendering="auto">9:00</text><text transform="translate(737.4,574) rotate(-90)" font-size="9.6" text-anchor="end" font-family="Liberation Sans" fill="#111" stroke="#111" stroke-width="0.2" shape-rendering="auto">12:00</text><text transform="translate(767.4,574) rotate(-90)" font-size="9.6" text-anchor="end" font-family="Liberation Sans" fill="#111" stroke="#111" stroke-width="0.2" shape-rendering="auto">15:00</text><text transform="translate(797.4,574) rotate(-90)" font-size="9.6" text-anchor="end" font-family="Liberation Sans" fill="#111" stroke="#111" stroke-width="0.2" shape-rendering="auto">18:00</text><text transform="translate(827.4,574) rotate(-90)" font-size="9.6" text-anchor="end" font-family="Liberation Sans" fill="#111" stroke="#111" stroke-width="0.2" shape-rendering="auto">21:00</text><rect x="868" y="477" width="22" height="6" fill="#4a7ab6"/><text x="893" y="484" font-size="10.4" font-family="Liberation Sans" fill="#111" shape-rendering="auto">Potência</text><rect x="868" y="499" width="22" height="3" fill="#a4504c"/><text x="893" y="504.5" font-size="10.4" font-family="Liberation Sans" fill="#111" shape-rendering="auto">Potência Média</text></svg><svg style="position:absolute;left:1084px;top:368px" width="180" height="247" viewBox="1084 368 180 247" shape-rendering="crispEdges"><rect x="1084.5" y="368.5" width="403" height="246" fill="#fff" stroke="#848484"/><rect x="1120" y="564" width="240" height="1" fill="#848484"/><text x="1115" y="568" font-size="10.5" text-anchor="end" font-family="Liberation Sans" fill="#111" stroke="#111" stroke-width="0.15" shape-rendering="auto">0</text><rect x="1120" y="534" width="240" height="1" fill="#848484"/><text x="1115" y="538" font-size="10.5" text-anchor="end" font-family="Liberation Sans" fill="#111" stroke="#111" stroke-width="0.15" shape-rendering="auto">50</text><rect x="1120" y="503" width="240" height="1" fill="#848484"/><text x="1115" y="507" font-size="10.5" text-anchor="end" font-family="Liberation Sans" fill="#111" stroke="#111" stroke-width="0.15" shape-rendering="auto">100</text><rect x="1120" y="472" width="240" height="1" fill="#848484"/><text x="1115" y="476" font-size="10.5" text-anchor="end" font-family="Liberation Sans" fill="#111" stroke="#111" stroke-width="0.15" shape-rendering="auto">150</text><rect x="1120" y="442" width="240" height="1" fill="#848484"/><text x="1115" y="446" font-size="10.5" text-anchor="end" font-family="Liberation Sans" fill="#111" stroke="#111" stroke-width="0.15" shape-rendering="auto">200</text><rect x="1120" y="412" width="240" height="1" fill="#848484"/><text x="1115" y="416" font-size="10.5" text-anchor="end" font-family="Liberation Sans" fill="#111" stroke="#111" stroke-width="0.15" shape-rendering="auto">250</text><rect x="1120" y="381" width="240" height="1" fill="#848484"/><text x="1115" y="385" font-size="10.5" text-anchor="end" font-family="Liberation Sans" fill="#111" stroke="#111" stroke-width="0.15" shape-rendering="auto">300</text><rect x="1124" y="381" width="1" height="188" fill="#848484"/><rect x="1126" y="429" width="2" height="135" fill="#4a7ab6"/><rect x="1131" y="429" width="2" height="135" fill="#4a7ab6"/><rect x="1136" y="429" width="2" height="135" fill="#4a7ab6"/><rect x="1141" y="429" width="2" height="135" fill="#4a7ab6"/><rect x="1146" y="474" width="2" height="90" fill="#4a7ab6"/><rect x="1150" y="474" width="2" height="90" fill="#4a7ab6"/><rect x="1155" y="474" width="2" height="90" fill="#4a7ab6"/><rect x="1160" y="474" width="2" height="90" fill="#4a7ab6"/><rect x="1165" y="474" width="2" height="90" fill="#4a7ab6"/><rect x="1170" y="474" width="2" height="90" fill="#4a7ab6"/><rect x="1175" y="474" width="2" height="90" fill="#4a7ab6"/><rect x="1180" y="474" width="2" height="90" fill="#4a7ab6"/><rect x="1185" y="429" width="2" height="135" fill="#4a7ab6"/><rect x="1190" y="429" width="2" height="135" fill="#4a7ab6"/><rect x="1195" y="429" width="2" height="135" fill="#4a7ab6"/><rect x="1200" y="429" width="2" height="135" fill="#4a7ab6"/><rect x="1204" y="442" width="2" height="122" fill="#4a7ab6"/><rect x="1209" y="442" width="2" height="122" fill="#4a7ab6"/><rect x="1214" y="442" width="2" height="122" fill="#4a7ab6"/><rect x="1219" y="442" width="2" height="122" fill="#4a7ab6"/><rect x="1224" y="442" width="2" height="122" fill="#4a7ab6"/><rect x="1229" y="418" width="2" height="146" fill="#4a7ab6"/><rect x="1234" y="418" width="2" height="146" fill="#4a7ab6"/><rect x="1239" y="418" width="2" height="146" fill="#4a7ab6"/><rect x="1244" y="418" width="2" height="146" fill="#4a7ab6"/><rect x="1249" y="442" width="2" height="122" fill="#4a7ab6"/><rect x="1253" y="442" width="2" height="122" fill="#4a7ab6"/><rect x="1258" y="442" width="2" height="122" fill="#4a7ab6"/><rect x="1263" y="442" width="2" height="122" fill="#4a7ab6"/><rect x="1268" y="442" width="2" height="122" fill="#4a7ab6"/><rect x="1273" y="442" width="2" height="122" fill="#4a7ab6"/><rect x="1278" y="442" width="2" height="122" fill="#4a7ab6"/><rect x="1283" y="442" width="2" height="122" fill="#4a7ab6"/><rect x="1288" y="442" width="2" height="122" fill="#4a7ab6"/><rect x="1293" y="442" width="2" height="122" fill="#4a7ab6"/><rect x="1298" y="442" width="2" height="122" fill="#4a7ab6"/><rect x="1302" y="442" width="2" height="122" fill="#4a7ab6"/><rect x="1307" y="442" width="2" height="122" fill="#4a7ab6"/><rect x="1312" y="442" width="2" height="122" fill="#4a7ab6"/><rect x="1317" y="442" width="2" height="122" fill="#4a7ab6"/><rect x="1322" y="442" width="2" height="122" fill="#4a7ab6"/><rect x="1327" y="442" width="2" height="122" fill="#4a7ab6"/><rect x="1332" y="442" width="2" height="122" fill="#4a7ab6"/><rect x="1337" y="442" width="2" height="122" fill="#4a7ab6"/><rect x="1342" y="442" width="2" height="122" fill="#4a7ab6"/><rect x="1347" y="442" width="2" height="122" fill="#4a7ab6"/><rect x="1351" y="442" width="2" height="122" fill="#4a7ab6"/><rect x="1356" y="442" width="2" height="122" fill="#4a7ab6"/><rect x="1124" y="564" width="1" height="4" fill="#848484"/><rect x="1129" y="564" width="1" height="4" fill="#848484"/><rect x="1134" y="564" width="1" height="4" fill="#848484"/><rect x="1139" y="564" width="1" height="4" fill="#848484"/><rect x="1144" y="564" width="1" height="4" fill="#848484"/><rect x="1148" y="564" width="1" height="4" fill="#848484"/><rect x="1153" y="564" width="1" height="4" fill="#848484"/><rect x="1158" y="564" width="1" height="4" fill="#848484"/><rect x="1163" y="564" width="1" height="4" fill="#848484"/><rect x="1168" y="564" width="1" height="4" fill="#848484"/><rect x="1173" y="564" width="1" height="4" fill="#848484"/><rect x="1178" y="564" width="1" height="4" fill="#848484"/><rect x="1183" y="564" width="1" height="4" fill="#848484"/><rect x="1188" y="564" width="1" height="4" fill="#848484"/><rect x="1193" y="564" width="1" height="4" fill="#848484"/><rect x="1198" y="564" width="1" height="4" fill="#848484"/><rect x="1202" y="564" width="1" height="4" fill="#848484"/><rect x="1207" y="564" width="1" height="4" fill="#848484"/><rect x="1212" y="564" width="1" height="4" fill="#848484"/><rect x="1217" y="564" width="1" height="4" fill="#848484"/><rect x="1222" y="564" width="1" height="4" fill="#848484"/><rect x="1227" y="564" width="1" height="4" fill="#848484"/><rect x="1232" y="564" width="1" height="4" fill="#848484"/><rect x="1237" y="564" width="1" height="4" fill="#848484"/><rect x="1242" y="564" width="1" height="4" fill="#848484"/><rect x="1247" y="564" width="1" height="4" fill="#848484"/><rect x="1251" y="564" width="1" height="4" fill="#848484"/><rect x="1256" y="564" width="1" height="4" fill="#848484"/><rect x="1261" y="564" width="1" height="4" fill="#848484"/><rect x="1266" y="564" width="1" height="4" fill="#848484"/><rect x="1271" y="564" width="1" height="4" fill="#848484"/><rect x="1276" y="564" width="1" height="4" fill="#848484"/><rect x="1281" y="564" width="1" height="4" fill="#848484"/><rect x="1286" y="564" width="1" height="4" fill="#848484"/><rect x="1291" y="564" width="1" height="4" fill="#848484"/><rect x="1296" y="564" width="1" height="4" fill="#848484"/><rect x="1300" y="564" width="1" height="4" fill="#848484"/><rect x="1305" y="564" width="1" height="4" fill="#848484"/><rect x="1310" y="564" width="1" height="4" fill="#848484"/><rect x="1315" y="564" width="1" height="4" fill="#848484"/><rect x="1320" y="564" width="1" height="4" fill="#848484"/><rect x="1325" y="564" width="1" height="4" fill="#848484"/><rect x="1330" y="564" width="1" height="4" fill="#848484"/><rect x="1335" y="564" width="1" height="4" fill="#848484"/><rect x="1340" y="564" width="1" height="4" fill="#848484"/><rect x="1345" y="564" width="1" height="4" fill="#848484"/><rect x="1349" y="564" width="1" height="4" fill="#848484"/><rect x="1354" y="564" width="1" height="4" fill="#848484"/><rect x="1359" y="564" width="1" height="4" fill="#848484"/><rect x="1126" y="438.7" width="232" height="3" fill="#a4504c" shape-rendering="auto"/><text transform="translate(1130.4,575) rotate(-90)" font-size="9.6" text-anchor="end" font-family="Liberation Sans" fill="#111" stroke="#111" stroke-width="0.2" shape-rendering="auto">0:00</text><text transform="translate(1159.8,575) rotate(-90)" font-size="9.6" text-anchor="end" font-family="Liberation Sans" fill="#111" stroke="#111" stroke-width="0.2" shape-rendering="auto">3:00</text><text transform="translate(1189.2,575) rotate(-90)" font-size="9.6" text-anchor="end" font-family="Liberation Sans" fill="#111" stroke="#111" stroke-width="0.2" shape-rendering="auto">6:00</text><text transform="translate(1218.6,575) rotate(-90)" font-size="9.6" text-anchor="end" font-family="Liberation Sans" fill="#111" stroke="#111" stroke-width="0.2" shape-rendering="auto">9:00</text><text transform="translate(1248.0,575) rotate(-90)" font-size="9.6" text-anchor="end" font-family="Liberation Sans" fill="#111" stroke="#111" stroke-width="0.2" shape-rendering="auto">12:00</text></svg><svg style="position:absolute;left:69px;top:700px" width="404" height="32" viewBox="69 700 404 32" shape-rendering="crispEdges"><rect x="69.5" y="700.5" width="403" height="40" fill="#fff" stroke="#848484"/><rect x="105" y="712" width="243" height="1" fill="#848484"/><rect x="109" y="712" width="1" height="25" fill="#848484"/><text x="100" y="716" font-size="10.5" text-anchor="end" font-family="Liberation Sans" fill="#111" shape-rendering="auto">350</text></svg><svg style="position:absolute;left:580px;top:701px" width="405" height="31" viewBox="580 701 405 31" shape-rendering="crispEdges"><rect x="580.5" y="701.5" width="404" height="40" fill="#fff" stroke="#848484"/><rect x="615" y="713" width="244" height="1" fill="#848484"/><rect x="620" y="713" width="1" height="25" fill="#848484"/><text x="611" y="717" font-size="10.5" text-anchor="end" font-family="Liberation Sans" fill="#111" shape-rendering="auto">400</text></svg><div style="position:absolute;left:1264px;top:208px;width:15px;height:524px;background:#3b3b3b;"></div><div style="position:absolute;left:1265px;top:210px;width:14px;height:4px;background:#ececec;"></div><svg style="position:absolute;left:1266px;top:220px" width="12" height="6"><path d="M1 5 L6 1 L11 5 Z" fill="#8a8a8a"/></svg><div style="position:absolute;left:1265px;top:233px;width:14px;height:207px;background:linear-gradient(90deg,#fdfdfd,#e3e3e3);border-radius:2px;"></div><svg style="position:absolute;left:1268px;top:332px" width="8" height="7"><path d="M0 0.5 H8 M0 2.5 H8 M0 4.5 H8 M0 6.5 H8" stroke="#777"/></svg><svg style="position:absolute;left:1266px;top:720px" width="12" height="6"><path d="M1 1 L6 5 L11 1 Z" fill="#8a8a8a"/></svg><div style="position:absolute;left:0px;top:732px;width:1264px;height:15px;background:linear-gradient(#606060,#474747);"></div><div style="position:absolute;left:0px;top:732px;width:640px;height:15px;background:linear-gradient(#d9dde2,#b9bec6);"></div><svg style="position:absolute;left:0px;top:735px" width="60" height="10" viewBox="0 0 60 10"><rect x="6" y="1" width="1.2" height="8" fill="#1a1a1a"/><path d="M12 1 L7.5 5 L12 9 Z" fill="#1a1a1a"/><path d="M26 1 L21.5 5 L26 9 Z" fill="#1a1a1a"/><path d="M36 1 L40.5 5 L36 9 Z" fill="#1a1a1a"/><path d="M50 1 L54.5 5 L50 9 Z" fill="#1a1a1a"/><rect x="54.8" y="1" width="1.2" height="8" fill="#1a1a1a"/></svg><div style="position:absolute;left:61px;top:732px;width:1px;height:15px;background:#8a8a8a;"></div><svg style="position:absolute;left:50px;top:732px" width="152" height="15"><defs><linearGradient id="tg50" x1="0" y1="0" x2="0" y2="1"><stop offset="0" stop-color="#f1f3f5"/><stop offset="0.5" stop-color="#dde1e6"/><stop offset="1" stop-color="#bfc6d0"/></linearGradient></defs><path d="M0 15 L12 0.5 H150.5 V15 Z" fill="url(#tg50)" stroke="#7d8188"/></svg><div style="position:absolute;left:77px;top:734px;font-size:11.4px;line-height:13.4px;color:#252a33;white-space:nowrap;">SIGEN-electricidade</div><svg style="position:absolute;left:193px;top:732px" width="83" height="15"><defs><linearGradient id="tg193" x1="0" y1="0" x2="0" y2="1"><stop offset="0" stop-color="#f1f3f5"/><stop offset="0.5" stop-color="#dde1e6"/><stop offset="1" stop-color="#bfc6d0"/></linearGradient></defs><path d="M0 15 L12 0.5 H81.5 V15 Z" fill="url(#tg193)" stroke="#7d8188"/></svg><div style="position:absolute;left:209px;top:734px;font-size:11.4px;line-height:13.4px;color:#252a33;white-space:nowrap;">utilizacoes</div><svg style="position:absolute;left:537px;top:732px" width="90" height="15"><defs><linearGradient id="tg537" x1="0" y1="0" x2="0" y2="1"><stop offset="0" stop-color="#f1f3f5"/><stop offset="0.5" stop-color="#dde1e6"/><stop offset="1" stop-color="#bfc6d0"/></linearGradient></defs><path d="M0 15 L12 0.5 H88.5 V15 Z" fill="url(#tg537)" stroke="#7d8188"/></svg><div style="position:absolute;left:548px;top:734px;font-size:11.4px;line-height:13.4px;color:#252a33;white-space:nowrap;">conclusoes</div><svg style="position:absolute;left:431px;top:732px" width="108" height="15"><defs><linearGradient id="tg431" x1="0" y1="0" x2="0" y2="1"><stop offset="0" stop-color="#f1f3f5"/><stop offset="0.5" stop-color="#dde1e6"/><stop offset="1" stop-color="#bfc6d0"/></linearGradient></defs><path d="M0 15 L12 0.5 H106.5 V15 Z" fill="url(#tg431)" stroke="#7d8188"/></svg><div style="position:absolute;left:449px;top:734px;font-size:11.4px;line-height:13.4px;color:#252a33;white-space:nowrap;">Calculos-ciclos</div><svg style="position:absolute;left:320px;top:732px" width="113" height="15"><defs><linearGradient id="tg320" x1="0" y1="0" x2="0" y2="1"><stop offset="0" stop-color="#f1f3f5"/><stop offset="0.5" stop-color="#dde1e6"/><stop offset="1" stop-color="#bfc6d0"/></linearGradient></defs><path d="M0 15 L12 0.5 H111.5 V15 Z" fill="url(#tg320)" stroke="#7d8188"/></svg><div style="position:absolute;left:340px;top:734px;font-size:11.4px;line-height:13.4px;color:#252a33;white-space:nowrap;">Calculos-analise</div><svg style="position:absolute;left:274px;top:732px" width="62" height="15"><path d="M0.5 0 V14.5 H47 L60 0" fill="#fff" stroke="#6a6a6a"/></svg><div style="position:absolute;left:284px;top:733px;font-size:12px;line-height:14px;color:#111;white-space:nowrap;font-weight:bold">ciclos</div><div style="position:absolute;left:0px;top:732px;width:62px;height:15px;background:linear-gradient(#dde1e6,#c2c8d0);border-top:1px solid #6a6a6a;box-sizing:border-box;"></div><svg style="position:absolute;left:0px;top:735px" width="60" height="10" viewBox="0 0 60 10"><rect x="6" y="1" width="1.2" height="8" fill="#1a1a1a"/><path d="M12 1 L7.5 5 L12 9 Z" fill="#1a1a1a"/><path d="M26 1 L21.5 5 L26 9 Z" fill="#1a1a1a"/><path d="M36 1 L40.5 5 L36 9 Z" fill="#1a1a1a"/><path d="M50 1 L54.5 5 L50 9 Z" fill="#1a1a1a"/><rect x="54.8" y="1" width="1.2" height="8" fill="#1a1a1a"/></svg><div style="position:absolute;left:61px;top:732px;width:1px;height:15px;background:#7a7a7a;"></div><svg style="position:absolute;left:612px;top:732px" width="50" height="15"><defs><linearGradient id="itg" x1="0" y1="0" x2="0" y2="1"><stop offset="0" stop-color="#e9ecef"/><stop offset="1" stop-color="#b9c0ca"/></linearGradient></defs><path d="M0 15 L12 0.5 H47 L35 15 Z" fill="url(#itg)" stroke="#7d8188"/></svg><svg style="position:absolute;left:628px;top:733px" width="18" height="13" viewBox="0 0 18 13"><rect x="4" y="3" width="12" height="9" fill="#dfe8f5" stroke="#6a7fa8"/><path d="M4 1 L6 5 M1 4 L6 5 M5 0 L7 4" stroke="#e8b030" stroke-width="1.5"/></svg><svg style="position:absolute;left:205px;top:730px" width="130" height="2"><path d="M0 1 H32 M89 1 H121" stroke="#555" stroke-dasharray="2 3"/></svg><div style="position:absolute;left:760px;top:732px;width:504px;height:15px;background:#3d3d3d;"></div><div style="position:absolute;left:760px;top:733px;width:4px;height:13px;background:#e0e0e0;border:1px solid #888;box-sizing:border-box;"></div><svg style="position:absolute;left:767px;top:735px" width="8" height="10"><path d="M6 1 L1 5 L6 9 Z" fill="#8a8a8a"/></svg><div style="position:absolute;left:782px;top:733px;width:362px;height:13px;background:linear-gradient(#fdfdfd,#dcdcdc);border-radius:2px;"></div><svg style="position:absolute;left:958px;top:736px" width="9" height="8"><path d="M0.5 0 V8 M2.5 0 V8 M4.5 0 V8 M6.5 0 V8" stroke="#777"/></svg><svg style="position:absolute;left:1244px;top:735px" width="8" height="10"><path d="M2 1 L7 5 L2 9 Z" fill="#8a8a8a"/></svg><div style="position:absolute;left:1259px;top:733px;width:4px;height:13px;background:#e0e0e0;border:1px solid #888;box-sizing:border-box;"></div><div style="position:absolute;left:1264px;top:732px;width:15px;height:15px;background:#3b3b3b;"></div><div style="position:absolute;left:0px;top:747px;width:1279px;height:25px;background:linear-gradient(#3c3f48 0px,#444752 9px,#2e3030 10px,#353535 11px,#383838 22px,#4a4d58 23px,#e6e6ee 24px);"></div><div style="position:absolute;left:8px;top:752px;font-size:11.3px;line-height:13.3px;color:#f4f4f4;white-space:nowrap;">Pronto</div><div style="position:absolute;left:51px;top:750px;width:1px;height:18px;background:#1a1a1a;border-right:1px solid #505050;"></div><svg style="position:absolute;left:59px;top:752px" width="16" height="13" viewBox="0 0 16 13"><rect x="1" y="1" width="14" height="11" fill="#eef3fb" stroke="#4a6fb0"/><path d="M5 4 H14 M5 7 H14 M5 10 H14" stroke="#6a8fd0"/><circle cx="3" cy="3" r="2.5" fill="#d04a3a"/></svg><div style="position:absolute;left:85px;top:750px;width:1px;height:18px;background:#1a1a1a;border-right:1px solid #505050;"></div><div style="position:absolute;left:1035px;top:747px;width:244px;height:23px;background:linear-gradient(#9a9da2,#6e7176 50%,#5a5d62);border-left:1px solid #222;box-sizing:border-box;"></div><div style="position:absolute;left:1039px;top:750px;width:57px;height:17px;border:1px solid #3a3a3a;border-radius:2px;box-sizing:border-box;background:linear-gradient(#a6a9ad,#7b7e83);"></div><div style="position:absolute;left:1040px;top:751px;width:19px;height:15px;background:linear-gradient(#fde9a8,#f3c24e);"></div><svg style="position:absolute;left:1043px;top:753px" width="14" height="11"><rect x="0.5" y="0.5" width="12" height="9" fill="#fff" stroke="#3a5fa8"/><path d="M0 3.5 H13 M0 6.5 H13 M4.5 0 V10 M8.5 0 V10" stroke="#3a5fa8"/></svg><svg style="position:absolute;left:1062px;top:752px" width="14" height="13"><rect x="1.5" y="1.5" width="10" height="10" fill="#ddd" stroke="#333"/><rect x="4" y="4" width="5" height="5" fill="#fff" stroke="#666"/></svg><svg style="position:absolute;left:1080px;top:752px" width="14" height="13"><rect x="1.5" y="1.5" width="10" height="10" fill="#ddd" stroke="#333"/><path d="M5 2 V8 M8 2 V8" stroke="#333" stroke-width="2"/></svg><div style="position:absolute;left:1104px;top:752px;font-size:12px;line-height:14px;color:#f6f6f6;white-space:nowrap;">85%</div><svg style="position:absolute;left:1140px;top:748px" width="139" height="22" viewBox="0 0 139 22"><path d="M16 10.5 H112" stroke="#222"/><circle cx="9" cy="11" r="7.5" fill="#e8e8e8" stroke="#555"/><rect x="5" y="10" width="8" height="2.5" fill="#333"/><path d="M57 5 H65 V12 L61 16 L57 12 Z" fill="#f2f2f2" stroke="#444"/><path d="M67 7 V15" stroke="#222"/><circle cx="127" cy="11" r="7.5" fill="#e8e8e8" stroke="#555"/><rect x="123" y="10" width="8" height="2.5" fill="#333"/><rect x="125.8" y="7" width="2.5" height="8" fill="#333"/></svg><div style="position:absolute;left:0px;top:770px;width:107px;height:2px;background:linear-gradient(#2a7a2a,#55c545);"></div>
</body></html>
